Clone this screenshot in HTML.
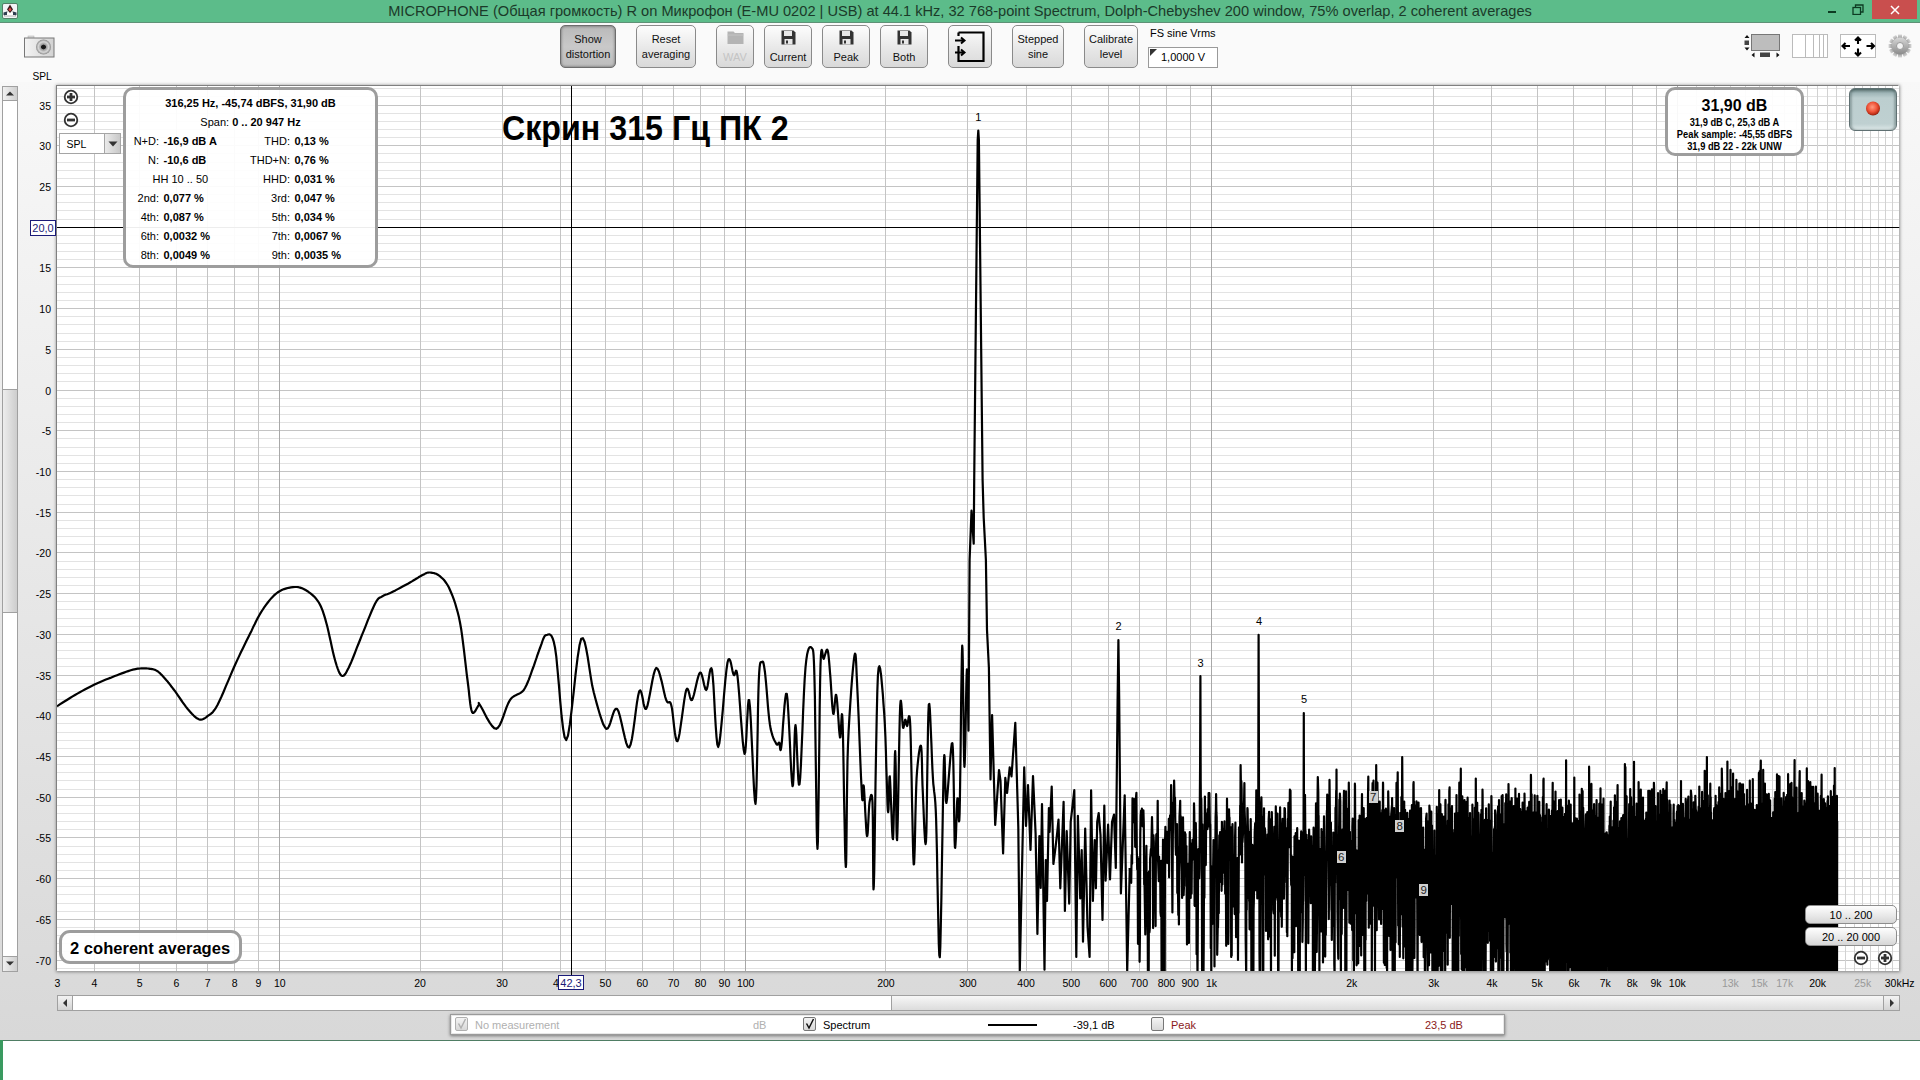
<!DOCTYPE html>
<html><head><meta charset="utf-8">
<style>
*{box-sizing:border-box}
html,body{margin:0;padding:0}
body{width:1920px;height:1080px;overflow:hidden;position:relative;font-family:"Liberation Sans",sans-serif;background:#fff;color:#000}
.a{position:absolute}
#titlebar{left:0;top:0;width:1920px;height:23px;background:#5cbc8a;border-bottom:1px solid #5e9176}
#ttext{left:0;top:0;width:1920px;height:22px;line-height:22px;text-align:center;font-size:15px;color:#1b3a29;white-space:nowrap;transform:scaleX(.9744)}
#toolbar{left:0;top:23px;width:1920px;height:59px;background:#fafafa}
#panel{left:0;top:82px;width:1920px;height:958px;background:linear-gradient(#f8f8f8,#d8d8d8)}
#bottom{left:0;top:1040px;width:1920px;height:40px;background:#fff;border-top:1px solid #4f7d64}
#plotbox{left:57px;top:86px;width:1842px;height:885px;background:#fff;box-shadow:-1px -1px 0 0 #808080,0 0 3px 1px rgba(0,0,0,.4)}
svg{position:absolute;left:0;top:0}
.btn{position:absolute;top:25px;height:43px;border:1px solid #8a8a8a;border-radius:5px;background:linear-gradient(#fdfdfd,#e6e6e6 60%,#d9d9d9);font-size:11px;text-align:center;line-height:15px;color:#111}
.btn .t{position:absolute;left:0;right:0;top:6px}
.btn.pressed{background:linear-gradient(#b9b9b9,#c9c9c9 50%,#bdbdbd);border-color:#6d6d6d;box-shadow:inset 0 0 3px rgba(0,0,0,.5)}
.ylab{position:absolute;right:1869px;font-size:10.5px;line-height:12px;text-align:right;white-space:nowrap}
.xlab{position:absolute;top:977px;font-size:10.5px;line-height:12px;white-space:nowrap;transform:translateX(-50%)}
.g{color:#999}
.dt{position:absolute;font-size:11px;line-height:13px;white-space:nowrap}
.r{text-align:right}
b{font-weight:bold}
.hl{position:absolute;font-size:11px;line-height:12px;transform:translateX(-50%)}
.hbox{position:absolute;font-size:11.5px;line-height:12px;background:#d0d0d0;color:#222;padding:0 1.5px}
.rb{position:absolute;border:1px solid #8d8d8d;border-radius:5px;background:linear-gradient(#fefefe,#e9e9e9 55%,#d6d6d6);font-size:11px;text-align:center;line-height:19px}
</style></head><body>
<div class="a" id="titlebar"></div>
<div class="a" id="ttext">MICROPHONE (Общая громкость) R on Микрофон (E-MU 0202 | USB) at 44.1 kHz, 32 768-point Spectrum, Dolph-Chebyshev 200 window, 75% overlap, 2 coherent averages</div>
<div class="a" id="toolbar"></div>
<div class="a" id="panel"></div>
<div class="a" id="plotbox"></div>
<div class="a" id="bottom"></div>
<svg width="1920" height="1080" viewBox="0 0 1920 1080">
<defs><clipPath id="pc"><rect x="57" y="86" width="1842.5" height="885"/></clipPath></defs>
<g clip-path="url(#pc)">
<line x1="57" y1="88.5" x2="1899.0" y2="88.5" stroke="#e3e3e3"/>
<line x1="57" y1="96.5" x2="1899.0" y2="96.5" stroke="#e3e3e3"/>
<line x1="57" y1="105.5" x2="1899.0" y2="105.5" stroke="#c4c4c4"/>
<line x1="57" y1="113.5" x2="1899.0" y2="113.5" stroke="#e3e3e3"/>
<line x1="57" y1="121.5" x2="1899.0" y2="121.5" stroke="#e3e3e3"/>
<line x1="57" y1="129.5" x2="1899.0" y2="129.5" stroke="#e3e3e3"/>
<line x1="57" y1="137.5" x2="1899.0" y2="137.5" stroke="#e3e3e3"/>
<line x1="57" y1="145.5" x2="1899.0" y2="145.5" stroke="#c4c4c4"/>
<line x1="57" y1="153.5" x2="1899.0" y2="153.5" stroke="#e3e3e3"/>
<line x1="57" y1="162.5" x2="1899.0" y2="162.5" stroke="#e3e3e3"/>
<line x1="57" y1="170.5" x2="1899.0" y2="170.5" stroke="#e3e3e3"/>
<line x1="57" y1="178.5" x2="1899.0" y2="178.5" stroke="#e3e3e3"/>
<line x1="57" y1="186.5" x2="1899.0" y2="186.5" stroke="#c4c4c4"/>
<line x1="57" y1="194.5" x2="1899.0" y2="194.5" stroke="#e3e3e3"/>
<line x1="57" y1="202.5" x2="1899.0" y2="202.5" stroke="#e3e3e3"/>
<line x1="57" y1="210.5" x2="1899.0" y2="210.5" stroke="#e3e3e3"/>
<line x1="57" y1="219.5" x2="1899.0" y2="219.5" stroke="#e3e3e3"/>
<line x1="57" y1="227.5" x2="1899.0" y2="227.5" stroke="#c4c4c4"/>
<line x1="57" y1="235.5" x2="1899.0" y2="235.5" stroke="#e3e3e3"/>
<line x1="57" y1="243.5" x2="1899.0" y2="243.5" stroke="#e3e3e3"/>
<line x1="57" y1="251.5" x2="1899.0" y2="251.5" stroke="#e3e3e3"/>
<line x1="57" y1="259.5" x2="1899.0" y2="259.5" stroke="#e3e3e3"/>
<line x1="57" y1="267.5" x2="1899.0" y2="267.5" stroke="#c4c4c4"/>
<line x1="57" y1="276.5" x2="1899.0" y2="276.5" stroke="#e3e3e3"/>
<line x1="57" y1="284.5" x2="1899.0" y2="284.5" stroke="#e3e3e3"/>
<line x1="57" y1="292.5" x2="1899.0" y2="292.5" stroke="#e3e3e3"/>
<line x1="57" y1="300.5" x2="1899.0" y2="300.5" stroke="#e3e3e3"/>
<line x1="57" y1="308.5" x2="1899.0" y2="308.5" stroke="#c4c4c4"/>
<line x1="57" y1="316.5" x2="1899.0" y2="316.5" stroke="#e3e3e3"/>
<line x1="57" y1="324.5" x2="1899.0" y2="324.5" stroke="#e3e3e3"/>
<line x1="57" y1="333.5" x2="1899.0" y2="333.5" stroke="#e3e3e3"/>
<line x1="57" y1="341.5" x2="1899.0" y2="341.5" stroke="#e3e3e3"/>
<line x1="57" y1="349.5" x2="1899.0" y2="349.5" stroke="#c4c4c4"/>
<line x1="57" y1="357.5" x2="1899.0" y2="357.5" stroke="#e3e3e3"/>
<line x1="57" y1="365.5" x2="1899.0" y2="365.5" stroke="#e3e3e3"/>
<line x1="57" y1="373.5" x2="1899.0" y2="373.5" stroke="#e3e3e3"/>
<line x1="57" y1="381.5" x2="1899.0" y2="381.5" stroke="#e3e3e3"/>
<line x1="57" y1="390.5" x2="1899.0" y2="390.5" stroke="#c4c4c4"/>
<line x1="57" y1="398.5" x2="1899.0" y2="398.5" stroke="#e3e3e3"/>
<line x1="57" y1="406.5" x2="1899.0" y2="406.5" stroke="#e3e3e3"/>
<line x1="57" y1="414.5" x2="1899.0" y2="414.5" stroke="#e3e3e3"/>
<line x1="57" y1="422.5" x2="1899.0" y2="422.5" stroke="#e3e3e3"/>
<line x1="57" y1="430.5" x2="1899.0" y2="430.5" stroke="#c4c4c4"/>
<line x1="57" y1="438.5" x2="1899.0" y2="438.5" stroke="#e3e3e3"/>
<line x1="57" y1="447.5" x2="1899.0" y2="447.5" stroke="#e3e3e3"/>
<line x1="57" y1="455.5" x2="1899.0" y2="455.5" stroke="#e3e3e3"/>
<line x1="57" y1="463.5" x2="1899.0" y2="463.5" stroke="#e3e3e3"/>
<line x1="57" y1="471.5" x2="1899.0" y2="471.5" stroke="#c4c4c4"/>
<line x1="57" y1="479.5" x2="1899.0" y2="479.5" stroke="#e3e3e3"/>
<line x1="57" y1="487.5" x2="1899.0" y2="487.5" stroke="#e3e3e3"/>
<line x1="57" y1="495.5" x2="1899.0" y2="495.5" stroke="#e3e3e3"/>
<line x1="57" y1="504.5" x2="1899.0" y2="504.5" stroke="#e3e3e3"/>
<line x1="57" y1="512.5" x2="1899.0" y2="512.5" stroke="#c4c4c4"/>
<line x1="57" y1="520.5" x2="1899.0" y2="520.5" stroke="#e3e3e3"/>
<line x1="57" y1="528.5" x2="1899.0" y2="528.5" stroke="#e3e3e3"/>
<line x1="57" y1="536.5" x2="1899.0" y2="536.5" stroke="#e3e3e3"/>
<line x1="57" y1="544.5" x2="1899.0" y2="544.5" stroke="#e3e3e3"/>
<line x1="57" y1="552.5" x2="1899.0" y2="552.5" stroke="#c4c4c4"/>
<line x1="57" y1="561.5" x2="1899.0" y2="561.5" stroke="#e3e3e3"/>
<line x1="57" y1="569.5" x2="1899.0" y2="569.5" stroke="#e3e3e3"/>
<line x1="57" y1="577.5" x2="1899.0" y2="577.5" stroke="#e3e3e3"/>
<line x1="57" y1="585.5" x2="1899.0" y2="585.5" stroke="#e3e3e3"/>
<line x1="57" y1="593.5" x2="1899.0" y2="593.5" stroke="#c4c4c4"/>
<line x1="57" y1="601.5" x2="1899.0" y2="601.5" stroke="#e3e3e3"/>
<line x1="57" y1="609.5" x2="1899.0" y2="609.5" stroke="#e3e3e3"/>
<line x1="57" y1="618.5" x2="1899.0" y2="618.5" stroke="#e3e3e3"/>
<line x1="57" y1="626.5" x2="1899.0" y2="626.5" stroke="#e3e3e3"/>
<line x1="57" y1="634.5" x2="1899.0" y2="634.5" stroke="#c4c4c4"/>
<line x1="57" y1="642.5" x2="1899.0" y2="642.5" stroke="#e3e3e3"/>
<line x1="57" y1="650.5" x2="1899.0" y2="650.5" stroke="#e3e3e3"/>
<line x1="57" y1="658.5" x2="1899.0" y2="658.5" stroke="#e3e3e3"/>
<line x1="57" y1="666.5" x2="1899.0" y2="666.5" stroke="#e3e3e3"/>
<line x1="57" y1="675.5" x2="1899.0" y2="675.5" stroke="#c4c4c4"/>
<line x1="57" y1="683.5" x2="1899.0" y2="683.5" stroke="#e3e3e3"/>
<line x1="57" y1="691.5" x2="1899.0" y2="691.5" stroke="#e3e3e3"/>
<line x1="57" y1="699.5" x2="1899.0" y2="699.5" stroke="#e3e3e3"/>
<line x1="57" y1="707.5" x2="1899.0" y2="707.5" stroke="#e3e3e3"/>
<line x1="57" y1="715.5" x2="1899.0" y2="715.5" stroke="#c4c4c4"/>
<line x1="57" y1="723.5" x2="1899.0" y2="723.5" stroke="#e3e3e3"/>
<line x1="57" y1="732.5" x2="1899.0" y2="732.5" stroke="#e3e3e3"/>
<line x1="57" y1="740.5" x2="1899.0" y2="740.5" stroke="#e3e3e3"/>
<line x1="57" y1="748.5" x2="1899.0" y2="748.5" stroke="#e3e3e3"/>
<line x1="57" y1="756.5" x2="1899.0" y2="756.5" stroke="#c4c4c4"/>
<line x1="57" y1="764.5" x2="1899.0" y2="764.5" stroke="#e3e3e3"/>
<line x1="57" y1="772.5" x2="1899.0" y2="772.5" stroke="#e3e3e3"/>
<line x1="57" y1="780.5" x2="1899.0" y2="780.5" stroke="#e3e3e3"/>
<line x1="57" y1="789.5" x2="1899.0" y2="789.5" stroke="#e3e3e3"/>
<line x1="57" y1="797.5" x2="1899.0" y2="797.5" stroke="#c4c4c4"/>
<line x1="57" y1="805.5" x2="1899.0" y2="805.5" stroke="#e3e3e3"/>
<line x1="57" y1="813.5" x2="1899.0" y2="813.5" stroke="#e3e3e3"/>
<line x1="57" y1="821.5" x2="1899.0" y2="821.5" stroke="#e3e3e3"/>
<line x1="57" y1="829.5" x2="1899.0" y2="829.5" stroke="#e3e3e3"/>
<line x1="57" y1="837.5" x2="1899.0" y2="837.5" stroke="#c4c4c4"/>
<line x1="57" y1="846.5" x2="1899.0" y2="846.5" stroke="#e3e3e3"/>
<line x1="57" y1="854.5" x2="1899.0" y2="854.5" stroke="#e3e3e3"/>
<line x1="57" y1="862.5" x2="1899.0" y2="862.5" stroke="#e3e3e3"/>
<line x1="57" y1="870.5" x2="1899.0" y2="870.5" stroke="#e3e3e3"/>
<line x1="57" y1="878.5" x2="1899.0" y2="878.5" stroke="#c4c4c4"/>
<line x1="57" y1="886.5" x2="1899.0" y2="886.5" stroke="#e3e3e3"/>
<line x1="57" y1="894.5" x2="1899.0" y2="894.5" stroke="#e3e3e3"/>
<line x1="57" y1="903.5" x2="1899.0" y2="903.5" stroke="#e3e3e3"/>
<line x1="57" y1="911.5" x2="1899.0" y2="911.5" stroke="#e3e3e3"/>
<line x1="57" y1="919.5" x2="1899.0" y2="919.5" stroke="#c4c4c4"/>
<line x1="57" y1="927.5" x2="1899.0" y2="927.5" stroke="#e3e3e3"/>
<line x1="57" y1="935.5" x2="1899.0" y2="935.5" stroke="#e3e3e3"/>
<line x1="57" y1="943.5" x2="1899.0" y2="943.5" stroke="#e3e3e3"/>
<line x1="57" y1="951.5" x2="1899.0" y2="951.5" stroke="#e3e3e3"/>
<line x1="57" y1="960.5" x2="1899.0" y2="960.5" stroke="#c4c4c4"/>
<line x1="57" y1="968.5" x2="1899.0" y2="968.5" stroke="#e3e3e3"/>
<line x1="94.5" y1="86" x2="94.5" y2="971" stroke="#c4c4c4"/>
<line x1="139.5" y1="86" x2="139.5" y2="971" stroke="#c4c4c4"/>
<line x1="176.5" y1="86" x2="176.5" y2="971" stroke="#c4c4c4"/>
<line x1="207.5" y1="86" x2="207.5" y2="971" stroke="#c4c4c4"/>
<line x1="234.5" y1="86" x2="234.5" y2="971" stroke="#c4c4c4"/>
<line x1="258.5" y1="86" x2="258.5" y2="971" stroke="#c4c4c4"/>
<line x1="279.5" y1="86" x2="279.5" y2="971" stroke="#a8a8a8"/>
<line x1="420.5" y1="86" x2="420.5" y2="971" stroke="#c4c4c4"/>
<line x1="502.5" y1="86" x2="502.5" y2="971" stroke="#c4c4c4"/>
<line x1="560.5" y1="86" x2="560.5" y2="971" stroke="#c4c4c4"/>
<line x1="605.5" y1="86" x2="605.5" y2="971" stroke="#c4c4c4"/>
<line x1="642.5" y1="86" x2="642.5" y2="971" stroke="#c4c4c4"/>
<line x1="673.5" y1="86" x2="673.5" y2="971" stroke="#c4c4c4"/>
<line x1="700.5" y1="86" x2="700.5" y2="971" stroke="#c4c4c4"/>
<line x1="724.5" y1="86" x2="724.5" y2="971" stroke="#c4c4c4"/>
<line x1="745.5" y1="86" x2="745.5" y2="971" stroke="#a8a8a8"/>
<line x1="885.5" y1="86" x2="885.5" y2="971" stroke="#c4c4c4"/>
<line x1="967.5" y1="86" x2="967.5" y2="971" stroke="#c4c4c4"/>
<line x1="1026.5" y1="86" x2="1026.5" y2="971" stroke="#c4c4c4"/>
<line x1="1071.5" y1="86" x2="1071.5" y2="971" stroke="#c4c4c4"/>
<line x1="1108.5" y1="86" x2="1108.5" y2="971" stroke="#c4c4c4"/>
<line x1="1139.5" y1="86" x2="1139.5" y2="971" stroke="#c4c4c4"/>
<line x1="1166.5" y1="86" x2="1166.5" y2="971" stroke="#c4c4c4"/>
<line x1="1190.5" y1="86" x2="1190.5" y2="971" stroke="#c4c4c4"/>
<line x1="1211.5" y1="86" x2="1211.5" y2="971" stroke="#a8a8a8"/>
<line x1="1351.5" y1="86" x2="1351.5" y2="971" stroke="#c4c4c4"/>
<line x1="1433.5" y1="86" x2="1433.5" y2="971" stroke="#c4c4c4"/>
<line x1="1491.5" y1="86" x2="1491.5" y2="971" stroke="#c4c4c4"/>
<line x1="1537.5" y1="86" x2="1537.5" y2="971" stroke="#c4c4c4"/>
<line x1="1573.5" y1="86" x2="1573.5" y2="971" stroke="#c4c4c4"/>
<line x1="1605.5" y1="86" x2="1605.5" y2="971" stroke="#c4c4c4"/>
<line x1="1632.5" y1="86" x2="1632.5" y2="971" stroke="#c4c4c4"/>
<line x1="1656.5" y1="86" x2="1656.5" y2="971" stroke="#c4c4c4"/>
<line x1="1677.5" y1="86" x2="1677.5" y2="971" stroke="#a8a8a8"/>
<line x1="1696.5" y1="86" x2="1696.5" y2="971" stroke="#d2d2d2"/>
<line x1="1714.5" y1="86" x2="1714.5" y2="971" stroke="#d2d2d2"/>
<line x1="1730.5" y1="86" x2="1730.5" y2="971" stroke="#d2d2d2"/>
<line x1="1745.5" y1="86" x2="1745.5" y2="971" stroke="#d2d2d2"/>
<line x1="1759.5" y1="86" x2="1759.5" y2="971" stroke="#d2d2d2"/>
<line x1="1772.5" y1="86" x2="1772.5" y2="971" stroke="#d2d2d2"/>
<line x1="1784.5" y1="86" x2="1784.5" y2="971" stroke="#d2d2d2"/>
<line x1="1796.5" y1="86" x2="1796.5" y2="971" stroke="#d2d2d2"/>
<line x1="1807.5" y1="86" x2="1807.5" y2="971" stroke="#d2d2d2"/>
<line x1="1817.5" y1="86" x2="1817.5" y2="971" stroke="#d2d2d2"/>
<line x1="1827.5" y1="86" x2="1827.5" y2="971" stroke="#d2d2d2"/>
<line x1="1836.5" y1="86" x2="1836.5" y2="971" stroke="#d2d2d2"/>
<line x1="1845.5" y1="86" x2="1845.5" y2="971" stroke="#d2d2d2"/>
<line x1="1854.5" y1="86" x2="1854.5" y2="971" stroke="#d2d2d2"/>
<line x1="1862.5" y1="86" x2="1862.5" y2="971" stroke="#d2d2d2"/>
<line x1="1870.5" y1="86" x2="1870.5" y2="971" stroke="#d2d2d2"/>
<line x1="1878.5" y1="86" x2="1878.5" y2="971" stroke="#d2d2d2"/>
<line x1="1885.5" y1="86" x2="1885.5" y2="971" stroke="#d2d2d2"/>
<line x1="1892.5" y1="86" x2="1892.5" y2="971" stroke="#d2d2d2"/>
<line x1="571.5" y1="86" x2="571.5" y2="971" stroke="#000"/>
<line x1="57" y1="227.5" x2="1899.5" y2="227.5" stroke="#000"/>
<path d="M57.0,706.2 58.4,705.4 60.2,704.2 62.4,702.8 64.8,701.3 67.3,699.7 70.0,698.0 72.6,696.4 75.0,695.0 77.4,693.6 79.8,692.3 82.3,690.9 84.8,689.5 87.2,688.2 89.7,686.9 92.1,685.7 94.5,684.5 96.8,683.4 99.1,682.4 101.4,681.4 103.6,680.5 105.9,679.6 108.1,678.7 110.3,677.9 112.5,677.0 114.8,676.1 117.1,675.2 119.4,674.3 121.8,673.4 124.0,672.6 126.2,671.8 128.2,671.1 130.0,670.5 131.6,670.0 133.0,669.6 134.3,669.3 135.5,669.1 136.6,668.9 137.7,668.7 138.8,668.6 140.0,668.5 141.3,668.4 142.6,668.4 143.9,668.3 145.2,668.3 146.4,668.4 147.7,668.5 148.9,668.6 150.0,668.8 151.0,668.9 152.0,669.1 152.9,669.2 153.8,669.5 154.7,669.8 155.6,670.1 156.5,670.6 157.5,671.2 158.5,672.0 159.6,672.9 160.7,674.0 161.8,675.1 162.9,676.3 164.0,677.5 165.1,678.7 166.2,680.0 167.3,681.2 168.3,682.5 169.4,683.8 170.4,685.1 171.4,686.5 172.5,687.9 173.7,689.5 175.0,691.2 176.4,693.2 177.9,695.3 179.5,697.7 181.1,700.0 182.7,702.4 184.4,704.7 186.0,706.9 187.5,708.8 189.0,710.5 190.5,712.2 191.9,713.8 193.4,715.3 194.8,716.6 196.1,717.7 197.5,718.6 198.8,719.2 200.0,719.6 201.1,719.6 202.2,719.5 203.2,719.1 204.2,718.6 205.3,717.9 206.4,717.1 207.5,716.2 208.6,715.4 209.7,714.7 210.8,713.9 212.0,712.9 213.1,711.7 214.4,710.0 215.9,707.8 217.5,705.0 219.3,701.3 221.4,696.8 223.6,691.7 225.9,686.2 228.3,680.6 230.6,675.1 232.9,669.8 235.0,665.0 237.0,660.6 239.0,656.4 240.9,652.3 242.8,648.4 244.7,644.5 246.5,640.8 248.3,637.2 250.0,633.8 251.7,630.4 253.2,627.1 254.8,624.0 256.2,621.0 257.7,618.1 259.3,615.3 260.8,612.6 262.5,610.0 264.2,607.4 266.0,604.9 267.8,602.5 269.7,600.1 271.6,597.9 273.5,595.9 275.5,594.1 277.5,592.5 279.6,591.2 281.8,590.1 284.1,589.1 286.4,588.4 288.7,587.8 290.9,587.4 293.0,587.1 295.0,587.0 296.8,587.0 298.5,587.2 300.1,587.6 301.6,588.1 303.1,588.7 304.6,589.5 306.0,590.3 307.5,591.2 309.0,592.3 310.5,593.4 312.0,594.6 313.4,595.9 314.9,597.3 316.2,598.9 317.5,600.6 318.8,602.5 319.9,604.5 320.9,606.5 321.8,608.6 322.7,610.9 323.5,613.3 324.4,616.1 325.3,619.1 326.2,622.5 327.3,626.5 328.4,631.2 329.5,636.2 330.7,641.5 331.8,646.8 332.9,651.7 334.0,656.2 335.0,660.0 335.9,663.2 336.8,666.0 337.7,668.6 338.5,670.7 339.3,672.6 340.1,674.0 340.9,675.1 341.8,675.8 342.6,676.0 343.4,675.8 344.2,675.3 345.0,674.3 345.8,673.1 346.7,671.5 347.7,669.6 348.8,667.5 349.9,665.0 351.2,662.2 352.5,659.0 353.9,655.5 355.3,651.8 356.8,647.9 358.4,644.0 360.0,640.0 361.7,635.7 363.7,630.9 365.7,625.8 367.7,620.6 369.8,615.6 371.7,611.0 373.5,607.0 375.0,603.8 376.3,601.4 377.4,599.8 378.3,598.7 379.1,598.0 379.9,597.5 380.7,597.2 381.6,596.8 382.5,596.2 383.5,595.6 384.4,595.2 385.3,594.8 386.2,594.5 387.2,594.2 388.3,593.8 389.7,593.2 391.2,592.5 393.2,591.5 395.4,590.4 397.8,589.1 400.4,587.7 403.0,586.3 405.5,585.0 407.9,583.7 410.0,582.5 411.9,581.4 413.7,580.3 415.4,579.3 417.0,578.3 418.5,577.3 419.9,576.5 421.2,575.7 422.5,575.0 423.7,574.4 424.7,573.9 425.6,573.4 426.4,573.0 427.2,572.8 428.1,572.6 429.0,572.5 430.0,572.5 431.1,572.6 432.3,572.8 433.6,573.0 434.8,573.4 436.1,573.8 437.4,574.5 438.7,575.3 440.0,576.2 441.2,577.4 442.5,578.5 443.8,579.8 445.0,581.3 446.2,583.0 447.5,585.0 448.8,587.3 450.0,590.0 451.3,593.0 452.6,596.2 453.9,599.7 455.2,603.5 456.4,607.7 457.7,612.2 458.9,617.1 460.0,622.5 461.1,628.7 462.1,635.7 463.1,643.4 464.1,651.3 465.0,659.2 465.9,666.8 466.7,673.9 467.5,680.0 468.2,685.5 468.8,690.7 469.3,695.6 469.8,700.0 470.3,704.0 470.8,707.3 471.4,710.0 472.0,712.0 472.8,712.9 473.7,712.8 474.6,711.9 475.6,710.5 476.5,708.8 477.4,707.2 478.2,705.8 478.8,705.0 479.1,704.5 479.1,704.0 479.0,703.4 478.8,703.1 478.7,703.0 478.8,703.2 479.2,703.8 480.0,705.0 481.3,707.2 483.1,710.5 485.1,714.5 487.3,718.7 489.7,722.6 492.0,725.9 494.2,728.1 496.2,728.8 498.1,727.5 499.9,724.8 501.6,721.0 503.3,716.5 505.0,711.7 506.6,707.1 508.3,703.1 510.0,700.0 511.7,697.9 513.5,696.5 515.4,695.4 517.2,694.6 518.9,693.8 520.6,692.9 522.2,691.7 523.8,690.0 525.1,687.8 526.4,685.3 527.6,682.5 528.8,679.6 529.9,676.6 531.0,673.6 532.0,670.7 533.0,668.0 534.0,665.4 534.9,662.7 535.8,660.0 536.7,657.4 537.5,654.9 538.4,652.5 539.2,650.2 540.0,648.0 540.8,645.9 541.6,643.7 542.3,641.5 543.0,639.5 543.8,637.7 544.5,636.3 545.4,635.4 546.2,635.0 547.2,634.8 548.2,634.5 549.2,634.3 550.3,634.7 551.4,635.8 552.6,638.2 553.8,641.9 555.0,647.5 556.3,656.6 557.5,669.5 558.9,684.8 560.2,700.9 561.6,716.0 563.1,728.6 564.6,737.2 566.2,740.0 568.0,735.6 569.8,724.7 571.7,709.4 573.7,691.8 575.6,673.9 577.6,657.7 579.5,645.3 581.2,638.8 582.9,638.2 584.6,641.7 586.1,648.3 587.7,657.0 589.2,666.8 590.7,676.7 592.2,685.6 593.8,692.5 595.3,698.3 596.9,704.1 598.5,709.8 600.1,715.2 601.7,720.0 603.2,724.1 604.8,727.0 606.2,728.8 607.7,728.5 609.0,726.3 610.3,722.8 611.6,718.6 612.9,714.4 614.2,710.9 615.6,708.8 617.0,708.8 618.5,711.4 620.0,716.5 621.6,723.2 623.2,730.4 624.8,737.3 626.3,743.1 627.8,746.8 629.2,747.5 630.6,744.5 632.0,738.4 633.3,730.1 634.6,720.7 635.8,711.1 637.0,702.4 638.2,695.4 639.2,691.2 640.2,690.3 641.1,691.8 642.0,695.0 642.8,699.0 643.5,703.2 644.4,706.7 645.3,708.8 646.2,708.8 647.4,705.9 648.5,701.0 649.8,694.5 651.1,687.5 652.4,680.5 653.7,674.4 655.0,670.0 656.2,668.0 657.5,668.7 658.9,671.5 660.2,675.9 661.6,681.1 662.9,686.8 664.1,692.2 665.2,696.8 666.2,700.0 667.1,701.7 667.8,702.4 668.4,702.5 669.0,702.2 669.5,702.0 670.0,702.2 670.6,703.1 671.2,705.0 672.0,708.6 672.7,713.9 673.4,720.2 674.1,726.6 674.9,732.7 675.7,737.6 676.6,740.7 677.5,741.2 678.5,738.6 679.6,733.2 680.7,725.7 681.9,717.3 683.1,708.6 684.2,700.6 685.3,694.1 686.2,690.0 687.1,688.6 687.8,689.1 688.5,690.9 689.2,693.5 689.8,696.3 690.5,698.7 691.2,700.1 692.0,700.0 692.9,698.0 693.9,694.7 694.9,690.5 696.0,685.8 697.0,681.2 698.1,677.1 699.1,674.0 700.0,672.5 700.9,672.8 701.7,674.6 702.5,677.4 703.3,680.8 704.0,684.2 704.8,687.2 705.5,689.3 706.2,690.0 707.0,688.6 707.7,685.4 708.4,681.0 709.1,676.3 709.8,672.0 710.5,669.1 711.3,668.1 712.0,670.0 712.7,676.1 713.5,686.2 714.2,698.9 714.9,712.5 715.7,725.7 716.5,736.8 717.3,744.4 718.2,747.0 719.3,743.5 720.4,735.0 721.6,722.9 722.9,708.8 724.1,694.2 725.3,680.6 726.5,669.5 727.5,662.5 728.4,659.5 729.3,659.1 730.2,660.6 731.0,663.4 731.7,666.9 732.4,670.4 733.1,673.3 733.8,675.0 734.3,675.2 734.8,674.3 735.2,672.9 735.6,671.6 736.0,670.7 736.4,670.8 736.9,672.5 737.5,676.2 738.2,683.2 739.1,693.3 740.0,705.5 740.9,718.4 741.9,730.9 742.8,741.8 743.7,749.8 744.5,753.8 745.2,752.2 745.8,745.8 746.4,736.3 746.9,725.2 747.5,714.4 748.0,705.4 748.6,700.1 749.2,700.0 750.0,707.0 750.8,720.2 751.6,737.4 752.5,756.2 753.3,774.6 754.1,790.1 754.9,800.6 755.5,803.8 756.0,798.4 756.5,786.3 756.9,769.4 757.3,749.5 757.7,728.7 758.0,708.8 758.4,692.0 758.8,680.0 759.2,672.5 759.6,667.4 760.0,664.3 760.4,662.6 760.8,662.0 761.2,662.0 761.6,662.2 762.0,662.0 762.4,661.7 762.7,661.6 763.1,662.0 763.4,662.8 763.7,664.2 764.1,666.3 764.5,669.0 765.0,672.5 765.5,677.3 766.1,683.5 766.7,690.6 767.3,698.2 767.9,705.9 768.6,713.3 769.3,719.8 770.0,725.0 770.7,729.1 771.6,732.5 772.4,735.4 773.2,737.7 774.1,739.7 774.9,741.3 775.6,742.6 776.2,743.8 776.8,744.5 777.3,744.7 777.7,744.5 778.0,744.0 778.3,743.4 778.6,742.8 778.9,742.5 779.2,742.5 779.5,743.2 779.7,744.7 779.9,746.5 780.1,748.3 780.3,749.7 780.5,750.2 780.8,749.6 781.2,747.5 781.8,742.6 782.4,734.8 783.0,725.2 783.8,715.2 784.5,705.8 785.3,698.3 786.0,693.9 786.8,693.8 787.5,699.4 788.2,710.2 789.0,724.5 789.8,740.5 790.5,756.4 791.2,770.5 791.9,781.0 792.5,786.2 793.0,785.1 793.4,778.9 793.8,769.2 794.1,757.7 794.4,745.9 794.7,735.4 795.1,727.9 795.5,725.0 795.9,727.9 796.4,735.5 796.8,746.2 797.3,758.2 797.8,769.8 798.3,779.2 798.9,784.7 799.5,784.5 800.2,777.7 800.9,765.4 801.6,749.3 802.4,730.9 803.1,712.0 803.9,694.0 804.7,678.7 805.5,667.5 806.3,660.0 807.1,654.6 808.0,650.8 808.8,648.4 809.7,647.3 810.4,647.0 811.1,647.3 811.8,648.0 812.3,648.6 812.7,649.2 813.0,650.2 813.3,652.2 813.6,655.7 813.9,661.2 814.2,669.1 814.5,680.0 814.9,697.0 815.2,720.8 815.6,748.8 816.0,777.9 816.4,805.3 816.7,828.1 817.1,843.6 817.5,848.8 817.9,841.4 818.2,823.4 818.6,797.9 819.0,767.8 819.4,736.4 819.7,706.7 820.1,681.9 820.5,665.0 820.9,655.7 821.3,651.0 821.7,649.8 822.1,650.9 822.5,653.5 822.9,656.3 823.3,658.4 823.8,658.8 824.2,657.6 824.7,656.0 825.2,654.3 825.7,652.6 826.2,651.1 826.6,650.0 827.1,649.6 827.5,650.0 827.9,651.2 828.2,653.0 828.5,655.3 828.8,658.1 829.1,661.3 829.4,664.8 829.7,668.6 830.0,672.5 830.4,677.2 830.8,682.9 831.2,689.2 831.6,695.7 832.0,701.9 832.4,707.2 832.9,711.3 833.2,713.8 833.6,713.9 834.0,711.8 834.4,708.4 834.7,704.3 835.1,700.2 835.5,696.8 835.8,694.8 836.2,695.0 836.7,697.8 837.2,702.7 837.7,709.1 838.2,716.2 838.7,723.3 839.1,729.7 839.6,734.6 840.0,737.5 840.4,737.1 840.7,733.5 841.0,728.1 841.3,722.2 841.6,717.2 841.9,714.2 842.2,714.7 842.5,720.0 842.9,732.3 843.3,751.5 843.7,774.9 844.1,800.0 844.6,824.3 845.0,845.3 845.4,860.4 845.8,867.0 846.1,864.4 846.3,854.7 846.5,839.5 846.7,820.8 846.9,800.2 847.2,779.5 847.5,760.5 848.0,745.0 848.6,731.4 849.4,717.4 850.3,703.5 851.2,690.3 852.1,678.4 853.0,668.2 853.8,660.4 854.5,655.5 855.0,653.6 855.5,654.3 855.8,657.2 856.1,661.9 856.4,668.2 856.7,675.6 857.1,683.8 857.5,692.5 858.0,703.1 858.6,716.4 859.2,731.5 859.8,747.3 860.4,762.7 861.0,776.7 861.6,788.3 862.0,796.2 862.3,800.0 862.6,800.3 862.8,798.2 863.0,794.6 863.1,790.6 863.3,787.2 863.5,785.4 863.8,786.2 864.1,790.2 864.5,796.5 864.9,804.3 865.3,812.7 865.8,821.0 866.2,828.2 866.6,833.6 867.0,836.2 867.3,835.8 867.7,832.9 868.0,828.2 868.3,822.5 868.6,816.4 868.9,810.5 869.2,805.7 869.5,802.5 869.9,800.3 870.3,798.2 870.7,796.3 871.1,795.1 871.5,794.9 871.9,795.8 872.2,798.3 872.5,802.5 872.7,811.0 872.9,824.5 873.0,840.8 873.1,857.6 873.2,872.8 873.3,884.2 873.5,889.4 873.8,886.4 874.2,872.5 874.6,848.6 875.0,818.0 875.5,783.9 876.1,749.4 876.7,717.7 877.3,692.1 877.9,675.6 878.6,668.0 879.4,666.2 880.2,668.9 881.1,675.2 881.9,683.9 882.8,693.9 883.5,704.1 884.2,713.4 884.8,723.6 885.4,736.7 885.9,751.4 886.3,766.7 886.8,781.4 887.2,794.4 887.5,804.6 887.9,810.9 888.2,812.2 888.5,809.3 888.7,803.3 888.9,795.8 889.1,787.9 889.3,781.2 889.5,776.9 889.8,776.3 890.1,780.5 890.5,788.7 890.9,799.4 891.4,811.1 891.8,822.4 892.2,831.8 892.6,837.9 893.0,839.2 893.3,834.2 893.6,823.6 893.9,809.4 894.2,793.5 894.4,777.8 894.7,764.2 894.9,754.7 895.2,751.1 895.4,755.3 895.7,766.1 895.9,781.3 896.1,798.5 896.3,815.3 896.5,829.4 896.8,838.5 897.1,840.1 897.4,832.9 897.8,818.5 898.2,799.1 898.6,777.0 899.0,754.3 899.4,733.4 899.8,716.4 900.2,705.5 900.6,701.0 900.9,700.7 901.3,703.6 901.7,708.6 902.0,714.6 902.3,720.4 902.7,725.1 903.0,727.5 903.3,727.9 903.6,727.3 903.9,726.1 904.2,724.6 904.4,722.9 904.7,721.4 904.9,720.2 905.2,719.7 905.4,719.9 905.7,720.4 905.9,721.3 906.1,722.4 906.3,723.5 906.5,724.5 906.8,725.4 907.1,726.0 907.4,725.4 907.8,723.2 908.2,720.4 908.6,717.7 909.0,716.1 909.5,716.4 909.9,719.4 910.3,726.0 910.7,738.2 911.1,756.1 911.6,777.7 912.0,800.6 912.5,822.9 912.9,842.4 913.3,856.9 913.7,864.4 914.1,864.0 914.4,857.3 914.8,846.0 915.1,831.7 915.4,816.2 915.8,800.9 916.2,787.6 916.6,777.8 917.1,770.7 917.7,764.1 918.3,758.4 918.9,753.5 919.5,749.7 920.0,747.0 920.6,745.7 921.0,745.8 921.3,747.8 921.6,751.8 921.8,757.3 922.0,763.8 922.1,771.0 922.3,778.4 922.5,785.5 922.8,792.0 923.1,799.3 923.5,808.5 923.9,818.5 924.3,828.1 924.8,836.4 925.2,842.1 925.6,844.1 926.0,841.4 926.4,831.8 926.7,815.4 927.0,794.5 927.3,771.5 927.7,748.7 928.0,728.4 928.4,712.9 928.8,704.6 929.3,703.9 929.8,708.9 930.3,718.1 930.8,730.1 931.4,743.5 931.9,756.8 932.4,768.8 932.9,777.8 933.3,783.8 933.8,788.0 934.1,791.2 934.5,794.2 934.9,797.6 935.3,802.4 935.7,809.1 936.1,818.7 936.5,833.6 937.0,854.3 937.4,878.2 937.9,902.8 938.4,925.5 938.8,943.9 939.3,955.3 939.8,957.2 940.3,947.0 940.8,926.0 941.4,897.5 941.9,864.9 942.5,831.5 943.0,800.7 943.5,775.9 943.9,760.5 944.3,755.1 944.6,756.7 944.8,763.4 945.0,773.2 945.3,784.0 945.6,794.0 945.9,800.9 946.4,803.0 947.0,799.3 947.7,791.4 948.5,780.9 949.4,769.3 950.3,758.1 951.1,749.0 951.8,743.5 952.4,743.2 952.9,749.4 953.3,761.2 953.6,776.9 953.9,794.5 954.1,812.1 954.4,828.0 954.6,840.3 954.9,847.1 955.2,847.9 955.5,844.1 955.9,837.1 956.2,828.2 956.5,818.6 956.8,809.5 957.1,802.4 957.4,798.3 957.7,798.4 958.0,802.0 958.2,807.5 958.5,813.6 958.8,818.8 959.0,821.5 959.3,820.4 959.6,814.0 959.9,799.8 960.2,778.1 960.6,751.6 960.9,723.3 961.2,695.7 961.6,671.7 961.9,654.1 962.2,645.7 962.5,648.5 962.8,660.8 963.0,679.5 963.3,701.8 963.6,724.7 963.8,745.1 964.1,760.1 964.4,766.8 964.7,764.0 965.0,754.1 965.4,739.3 965.7,721.8 966.0,703.8 966.3,687.6 966.6,675.4 966.9,669.3 967.2,669.8 967.4,674.9 967.6,683.4 967.9,693.9 968.1,705.2 968.2,715.9 968.4,724.9 968.5,730.7 969.6,560.0 971.5,510.7 973.7,543.7 974.2,480.0 977.7,140.0 978.3,130.5 978.9,140.0 982.6,480.0 983.7,517.8 985.9,560.0 987.0,630.0 988.9,667.8 990.5,779.4 992.1,715.0 995.2,825.0 999.0,770.0 1000.5,781.0 1003.1,853.4 1005.3,777.8 1007.1,793.0 1009.7,767.4 1011.5,776.3 1015.3,722.9 1018.3,827.2 1019.8,971.0 1024.2,767.4 1026.0,826.0 1028.0,785.0 1030.5,850.0 1033.0,776.0 1035.6,833.6 1037.4,934.0 1039.4,836.0 1040.7,888.0 1042.0,804.0 1044.5,969.7 1045.8,860.0 1047.0,901.0 1048.9,808.0 1049.6,832.0 1051.7,786.5 1053.4,864.0 1055.5,847.6 1057.3,832.0 1058.5,819.6 1060.3,888.3 1063.6,801.8 1064.9,911.0 1066.7,831.0 1069.2,903.6 1070.7,822.0 1074.3,790.0 1076.3,957.0 1077.9,815.8 1080.2,898.5 1081.7,850.0 1083.0,941.7 1085.2,828.5 1087.5,926.5 1089.6,957.0 1091.1,790.3 1092.9,901.0 1094.7,840.0 1095.9,888.3 1097.2,822.0 1098.7,813.0 1100.5,835.0 1102.5,920.0 1104.3,805.6 1105.6,880.7 1108.1,824.7 1110.0,879.4 1112.0,822.0 1114.0,814.5 1115.8,868.0 1117.6,700.0 1118.4,640.0 1119.2,700.0 1120.9,893.4 1124.7,795.4 1127.2,971.0 1129.8,868.0" fill="none" stroke="#000" stroke-width="2.2" stroke-linejoin="round"/>
<path d="M1129.8,868.0 1131.2,882.8 1131.6,855.0 1132.1,863.7 1132.5,798.4 1132.9,806.0 1133.3,801.4 1133.7,802.8 1134.1,799.2 1134.5,822.8 1134.8,811.2 1135.2,846.8 1135.6,844.1 1136.0,797.6 1136.4,792.8 1136.8,850.3 1137.2,869.6 1137.6,856.9 1138.0,943.8 1138.4,858.8 1138.8,882.8 1139.2,877.4 1139.6,961.8 1139.9,937.0 1140.3,834.2 1140.7,815.6 1141.1,810.5 1141.5,816.1 1141.9,808.7 1142.3,818.2 1142.6,826.3 1143.0,819.8 1143.4,810.3 1143.8,823.9 1144.2,884.6 1144.5,883.7 1144.9,907.3 1145.3,934.5 1145.7,920.4 1146.0,868.9 1146.4,845.9 1146.8,923.9 1147.2,915.6 1147.5,872.9 1147.9,973.5 1148.3,975.0 1148.7,975.0 1149.0,871.4 1149.4,932.3 1149.8,928.5 1150.1,859.0 1150.5,854.4 1150.9,849.2 1151.2,855.3 1151.6,835.8 1152.0,817.1 1152.3,830.0 1152.7,849.0 1153.1,928.1 1153.4,835.1 1153.8,841.7 1154.1,881.8 1154.5,856.1 1154.9,864.8 1155.2,901.4 1155.6,926.1 1155.9,854.0 1156.3,834.4 1156.7,853.4 1157.0,834.3 1157.4,838.7 1157.7,800.8 1158.1,861.0 1158.4,869.7 1158.8,881.1 1159.1,856.5 1159.5,873.7 1159.8,880.7 1160.2,869.4 1160.5,912.4 1160.9,916.1 1161.2,860.9 1161.6,975.0 1161.9,909.1 1162.3,975.0 1162.6,887.0 1163.0,839.7 1163.3,895.4 1163.7,881.3 1164.0,893.9 1164.3,970.2 1164.7,975.0 1165.0,843.9 1165.4,826.9 1165.7,861.2 1166.1,831.6 1166.4,841.8 1166.7,845.2 1167.1,863.1 1167.4,847.1 1167.8,831.7 1168.1,858.9 1168.4,858.1 1168.8,818.8 1169.1,877.3 1169.4,842.3 1169.8,822.9 1170.1,815.4 1170.4,830.0 1170.8,818.8 1171.1,785.1 1171.4,808.5 1171.8,806.9 1172.1,867.8 1172.4,912.5 1172.8,842.6 1173.1,809.5 1173.4,802.6 1173.7,807.0 1174.1,780.6 1174.4,792.5 1174.7,811.7 1175.0,797.7 1175.4,829.0 1175.7,847.9 1176.0,854.8 1176.3,836.3 1176.7,834.0 1177.0,824.2 1177.3,893.0 1177.6,876.1 1178.0,891.2 1178.3,915.1 1178.6,847.2 1178.9,924.4 1179.2,886.7 1179.5,816.7 1179.9,808.3 1180.2,800.8 1180.5,840.9 1180.8,816.4 1181.1,851.8 1181.4,859.4 1181.8,870.8 1182.1,897.9 1182.4,864.3 1182.7,843.5 1183.0,817.4 1183.3,839.8 1183.6,895.1 1184.0,886.0 1184.3,886.0 1184.6,834.7 1184.9,832.4 1185.2,838.4 1185.5,834.0 1185.8,870.7 1186.1,852.6 1186.4,846.2 1186.7,901.6 1187.0,944.5 1187.4,907.0 1187.7,902.7 1188.0,867.4 1188.3,869.4 1188.6,863.6 1188.9,943.0 1189.2,875.8 1189.5,857.0 1189.8,832.1 1190.1,870.4 1190.4,843.3 1190.7,897.9 1191.0,869.7 1191.3,888.3 1191.6,893.6 1191.9,854.5 1192.2,858.1 1192.5,839.8 1192.8,859.3 1193.1,857.6 1193.4,854.9 1193.7,850.7 1194.0,803.4 1194.3,815.4 1194.6,905.4 1194.9,905.9 1195.2,832.7 1195.5,833.6 1195.8,823.1 1196.0,840.1 1196.3,854.1 1196.6,954.3 1196.9,898.5 1197.2,941.4 1197.5,975.0 1197.8,928.4 1198.1,867.5 1198.4,849.1 1198.7,855.3 1199.0,874.1 1199.2,878.3 1199.5,868.2 1199.8,807.2 1200.1,765.6 1200.4,676.2 1200.7,782.1 1201.0,815.0 1201.3,798.5 1201.5,816.9 1201.8,854.6 1202.1,975.0 1202.4,824.4 1202.7,878.9 1203.0,839.7 1203.3,929.9 1203.5,975.0 1203.8,933.8 1204.1,830.8 1204.4,897.8 1204.7,824.5 1204.9,796.5 1205.2,835.9 1205.5,818.9 1205.8,865.1 1206.1,827.0 1206.3,824.2 1206.6,825.5 1206.9,815.8 1207.2,813.2 1207.5,829.1 1207.7,809.2 1208.0,823.0 1208.3,826.5 1208.6,793.2 1208.8,807.6 1209.1,794.0 1209.4,793.1 1209.7,813.4 1209.9,826.4 1210.2,824.6 1210.5,867.6 1210.8,948.3 1211.0,899.8 1211.3,975.0 1211.6,866.7 1211.8,884.8 1212.1,905.5 1212.4,923.9 1212.7,921.2 1212.9,878.7 1213.2,864.8 1213.5,840.1 1213.7,863.1 1214.0,878.2 1214.3,888.4 1214.5,966.4 1214.8,860.0 1215.1,870.6 1215.3,855.0 1215.6,817.0 1215.9,809.0 1216.1,794.2 1216.4,812.4 1216.7,817.2 1216.9,855.2 1217.2,954.8 1217.5,939.3 1217.7,927.9 1218.0,927.2 1218.3,908.6 1218.5,870.8 1218.8,913.2 1219.0,860.3 1219.3,835.4 1219.6,850.9 1219.8,838.5 1220.1,832.1 1220.3,838.5 1220.6,860.9 1220.9,859.3 1221.1,882.4 1221.4,842.3 1221.6,890.8 1221.9,821.9 1222.2,878.7 1222.4,884.6 1222.7,853.2 1222.9,873.2 1223.2,856.3 1223.4,837.1 1223.7,837.4 1224.0,829.2 1224.2,828.3 1224.5,821.3 1224.7,842.7 1225.0,837.9 1225.2,893.7 1225.5,830.8 1225.7,848.4 1226.0,904.5 1226.2,945.8 1226.5,867.5 1226.8,845.2 1227.0,798.7 1227.3,848.4 1227.5,809.8 1227.8,819.6 1228.0,909.9 1228.3,943.9 1228.5,930.7 1228.8,855.8 1229.0,809.3 1229.3,820.1 1229.5,817.6 1229.8,843.0 1230.3,859.1 1230.5,827.2 1230.7,855.0 1231.0,856.7 1231.2,957.0 1231.5,955.4 1231.7,955.4 1232.0,851.4 1232.2,838.0 1232.5,824.2 1232.7,836.8 1233.0,892.6 1233.2,888.4 1233.4,900.8 1233.7,906.5 1233.9,871.8 1234.2,855.0 1234.4,891.6 1234.7,914.1 1234.9,879.7 1235.1,836.3 1235.4,822.6 1235.6,870.1 1235.9,907.3 1236.1,937.2 1236.4,936.1 1236.6,904.9 1236.8,908.1 1237.1,894.6 1237.3,858.1 1237.6,892.2 1237.8,872.0 1238.0,959.9 1238.3,899.7 1238.5,913.1 1239.0,827.3 1239.2,833.3 1239.5,836.1 1239.7,847.7 1239.9,854.6 1240.2,804.9 1240.4,820.0 1240.6,765.0 1240.9,784.2 1241.1,800.7 1241.3,781.1 1241.6,789.4 1241.8,815.4 1242.0,862.4 1242.3,827.6 1242.5,842.1 1243.0,833.3 1243.2,812.7 1243.4,809.8 1243.7,808.0 1243.9,804.0 1244.1,799.5 1244.4,783.2 1244.6,810.5 1244.8,815.8 1245.1,826.2 1245.3,846.8 1245.5,894.1 1245.7,941.0 1246.2,975.0 1246.4,890.5 1246.7,909.9 1246.9,864.5 1247.1,859.6 1247.4,808.0 1247.6,809.7 1247.8,824.0 1248.3,847.8 1248.5,859.4 1248.7,898.5 1248.9,895.0 1249.2,901.3 1249.4,900.8 1249.6,929.3 1249.8,852.2 1250.1,831.6 1250.3,857.7 1250.7,819.0 1251.0,853.4 1251.2,895.5 1251.4,975.0 1251.6,895.9 1251.9,902.4 1252.1,849.4 1252.3,844.8 1252.5,894.2 1252.7,862.8 1253.2,868.0 1253.4,975.0 1253.6,909.2 1253.8,902.4 1254.1,887.0 1254.3,845.5 1254.5,854.4 1254.7,832.0 1255.2,823.0 1255.4,862.0 1255.6,879.1 1255.8,890.2 1256.0,838.6 1256.3,790.3 1256.7,828.8 1256.9,866.2 1257.1,874.7 1257.3,898.4 1257.6,813.3 1257.8,831.9 1258.2,854.4 1258.4,721.5 1258.6,634.8 1258.9,743.5 1259.1,862.0 1259.3,846.2 1259.5,954.2 1259.7,975.0 1260.1,935.0 1260.4,975.0 1260.6,931.8 1261.0,829.0 1261.2,802.4 1261.4,797.3 1261.6,815.1 1261.8,820.5 1262.1,817.0 1262.5,831.2 1262.7,835.5 1262.9,898.1 1263.1,975.0 1263.3,969.3 1263.5,875.3 1264.0,808.3 1264.2,850.8 1264.4,827.8 1264.6,874.5 1264.8,828.0 1265.2,831.5 1265.4,856.6 1265.6,841.1 1265.8,849.6 1266.0,930.9 1266.5,914.5 1266.7,852.0 1266.9,857.0 1267.1,886.6 1267.5,834.5 1267.7,838.8 1267.9,846.5 1268.1,939.3 1268.3,852.0 1268.5,850.3 1268.7,819.2 1269.1,811.8 1269.3,914.3 1269.5,879.3 1269.7,936.4 1270.2,828.9 1270.4,819.6 1270.6,838.5 1271.0,975.0 1271.2,886.3 1271.4,875.1 1271.6,833.9 1271.8,812.1 1272.2,836.3 1272.4,860.1 1272.6,843.9 1272.8,837.5 1273.2,853.1 1273.4,909.9 1273.8,913.5 1274.0,847.8 1274.2,851.9 1274.4,826.8 1274.8,955.7 1275.0,853.7 1275.2,888.6 1275.4,900.0 1275.8,806.4 1276.0,823.8 1276.2,853.3 1276.4,866.8 1276.6,823.7 1276.8,837.2 1277.2,897.6 1277.4,870.6 1277.5,813.6 1277.9,889.1 1278.1,975.0 1278.3,911.5 1278.5,975.0 1278.9,851.4 1279.1,911.8 1279.3,908.8 1279.5,892.3 1279.9,831.9 1280.1,807.3 1280.5,855.9 1280.7,842.0 1280.9,832.1 1281.0,858.2 1281.2,916.8 1281.6,884.5 1281.8,926.8 1282.0,887.1 1282.4,824.0 1282.6,818.8 1283.0,831.1 1283.2,836.6 1283.3,830.7 1283.5,846.1 1283.9,898.7 1284.1,886.2 1284.5,808.1 1284.7,820.0 1284.9,808.6 1285.2,823.3 1285.4,850.8 1285.6,839.0 1285.8,846.5 1286.2,828.1 1286.4,882.4 1286.6,866.1 1286.9,932.3 1287.1,880.0 1287.3,936.2 1287.5,910.3 1287.9,818.9 1288.2,828.4 1288.4,802.9 1288.6,819.2 1289.0,828.9 1289.2,847.2 1289.4,824.3 1289.7,809.0 1289.9,789.5 1290.3,807.7 1290.5,790.6 1290.7,816.9 1290.8,857.9 1291.2,885.1 1291.4,855.6 1291.8,879.3 1291.9,975.0 1292.1,923.9 1292.5,958.3 1292.7,880.4 1292.8,929.6 1293.0,857.0 1293.2,905.8 1293.6,877.6 1293.8,928.2 1294.3,952.2 1294.5,836.3 1294.7,839.9 1294.8,846.9 1295.0,897.8 1295.4,858.4 1295.6,844.7 1295.7,833.2 1296.1,926.1 1296.3,867.3 1296.6,899.9 1297.0,837.9 1297.2,828.0 1297.3,857.4 1297.5,878.9 1297.7,859.9 1298.1,926.1 1298.2,975.0 1298.8,868.6 1298.9,840.6 1299.3,848.7 1299.5,875.6 1299.8,975.0 1300.0,866.4 1300.2,876.6 1300.3,905.7 1300.7,843.4 1300.9,856.8 1301.0,838.8 1301.2,831.4 1301.7,835.7 1301.9,912.6 1302.1,841.0 1302.4,942.0 1302.8,921.2 1303.0,878.3 1303.1,901.2 1303.5,855.8 1303.8,713.0 1304.0,824.4 1304.2,874.9 1304.3,844.2 1304.5,818.2 1304.7,808.7 1305.0,794.9 1305.4,846.8 1305.5,830.8 1305.9,975.0 1306.0,905.5 1306.4,839.0 1306.6,834.8 1306.9,872.1 1307.1,870.2 1307.2,893.3 1307.6,847.6 1307.9,869.8 1308.1,846.6 1308.3,943.2 1308.8,839.6 1308.9,883.6 1309.1,829.7 1309.3,837.1 1309.6,847.3 1309.9,888.7 1310.1,873.1 1310.3,845.4 1310.8,903.2 1310.9,871.3 1311.1,836.3 1311.4,874.6 1311.8,878.1 1311.9,845.8 1312.1,854.9 1312.4,874.1 1312.8,888.2 1312.9,975.0 1313.2,934.1 1313.4,847.0 1313.6,827.7 1313.9,883.6 1314.1,938.3 1314.4,861.7 1314.6,923.0 1314.9,971.0 1315.2,941.7 1315.4,851.5 1315.5,854.1 1315.9,823.4 1316.0,803.4 1316.3,849.7 1316.5,883.8 1316.7,952.0 1317.2,900.7 1317.5,812.8 1317.6,793.1 1317.8,777.1 1318.3,792.6 1318.4,814.9 1318.6,815.8 1318.9,879.8 1319.2,886.6 1319.4,975.0 1319.6,876.7 1319.7,870.3 1320.0,897.0 1320.4,920.9 1320.7,848.9 1320.8,874.4 1321.1,931.5 1321.5,829.1 1321.8,930.0 1321.9,839.3 1322.1,848.0 1322.3,837.4 1322.6,832.4 1322.9,870.5 1323.0,962.5 1323.4,880.9 1323.5,908.4 1324.0,816.4 1324.1,825.5 1324.4,870.4 1324.8,879.1 1324.9,867.7 1325.2,956.6 1325.4,868.2 1325.8,935.0 1326.0,916.3 1326.1,892.5 1326.3,875.2 1326.6,837.1 1326.9,810.5 1327.1,812.1 1327.2,794.5 1327.5,824.7 1327.7,803.9 1328.1,802.0 1328.4,828.5 1328.6,849.9 1328.8,919.1 1329.1,879.2 1329.2,831.2 1329.5,779.9 1330.0,825.5 1330.1,856.9 1330.3,869.4 1330.7,884.7 1330.9,822.6 1331.0,839.5 1331.5,910.3 1331.6,891.6 1331.8,939.9 1332.2,907.1 1332.4,884.4 1332.7,845.8 1333.0,925.6 1333.3,832.6 1333.4,898.3 1333.6,885.1 1333.9,845.1 1334.2,851.1 1334.3,964.8 1334.6,975.0 1334.8,866.6 1335.1,882.9 1335.5,807.7 1335.8,839.6 1335.9,813.8 1336.2,790.5 1336.4,804.9 1336.5,769.7 1337.0,866.0 1337.3,861.2 1337.4,885.8 1337.5,912.3 1338.0,948.7 1338.3,958.8 1338.4,897.4 1338.6,899.8 1338.7,850.1 1339.0,840.0 1339.4,799.6 1339.7,834.9 1339.9,793.7 1340.3,801.4 1340.4,840.6 1340.7,889.6 1340.9,975.0 1341.0,906.8 1341.3,831.5 1341.6,848.5 1341.7,933.9 1342.0,884.6 1342.3,841.3 1342.6,829.3 1342.9,896.0 1343.3,907.8 1343.4,831.2 1343.6,836.7 1343.7,803.8 1344.0,790.9 1344.3,825.8 1344.6,809.4 1345.0,862.3 1345.1,848.5 1345.3,975.0 1345.6,852.3 1346.0,791.4 1346.1,878.1 1346.4,975.0 1346.5,917.2 1346.8,836.3 1347.2,861.2 1347.4,890.0 1347.6,888.5 1347.9,829.9 1348.1,808.7 1348.2,867.0 1348.6,821.6 1348.8,782.7 1349.0,802.9 1349.4,922.7 1349.7,872.8 1349.9,831.9 1350.3,916.8 1350.4,884.8 1350.7,923.7 1350.8,840.9 1351.2,907.6 1351.4,845.0 1351.8,843.1 1351.9,902.7 1352.2,930.1 1352.4,827.1 1352.7,818.6 1353.0,867.9 1353.3,960.5 1353.4,859.4 1353.5,878.4 1353.9,975.0 1354.1,871.8 1354.3,830.0 1354.6,882.2 1354.9,783.7 1355.0,785.8 1355.4,855.9 1355.5,849.1 1355.8,913.2 1356.2,880.3 1356.5,850.3 1356.6,965.3 1356.7,894.8 1357.0,918.3 1357.4,853.2 1357.5,870.0 1357.9,960.8 1358.2,963.3 1358.5,881.2 1358.7,820.1 1359.0,837.4 1359.1,848.7 1359.4,946.0 1359.5,885.2 1359.6,815.5 1360.2,824.5 1360.3,859.2 1360.7,944.1 1360.8,861.5 1361.2,955.4 1361.5,815.9 1361.6,822.6 1362.0,794.0 1362.1,835.1 1362.4,811.4 1362.6,889.0 1362.9,934.9 1363.3,822.1 1363.4,841.0 1363.7,808.2 1363.9,847.7 1364.0,824.4 1364.3,975.0 1364.5,841.6 1364.9,819.0 1365.2,975.0 1365.4,872.3 1365.6,940.0 1365.7,844.6 1366.2,900.9 1366.5,834.3 1366.6,818.0 1366.8,860.6 1367.1,819.0 1367.3,872.1 1367.6,893.4 1368.0,797.6 1368.3,776.7 1368.5,825.5 1368.6,844.5 1368.8,927.7 1369.1,902.1 1369.3,856.4 1369.6,901.0 1370.0,836.5 1370.2,803.5 1370.3,869.6 1370.8,881.1 1371.0,924.0 1371.3,895.8 1371.4,838.7 1371.7,838.1 1371.8,975.0 1372.3,820.5 1372.4,795.9 1372.6,783.1 1372.9,814.7 1373.0,881.3 1373.3,833.1 1373.5,780.6 1373.8,814.2 1374.0,799.1 1374.1,906.0 1374.5,808.4 1375.0,975.0 1375.2,858.5 1375.5,816.0 1375.7,852.3 1376.0,816.3 1376.2,765.2 1376.4,801.9 1376.7,930.2 1376.9,844.8 1377.0,862.6 1377.4,782.6 1377.6,812.7 1377.8,846.8 1378.0,867.9 1378.2,811.8 1378.6,848.4 1378.8,892.6 1379.1,919.4 1379.3,826.1 1379.7,801.7 1379.9,840.3 1380.3,866.2 1380.4,813.1 1380.6,823.8 1381.0,860.1 1381.1,923.9 1381.3,835.4 1381.6,856.0 1381.9,837.1 1382.3,810.1 1382.5,909.0 1382.7,827.6 1383.0,782.6 1383.1,784.6 1383.4,894.8 1383.5,843.4 1383.9,962.8 1384.0,887.6 1384.4,810.4 1384.7,842.4 1384.8,964.9 1385.2,926.5 1385.3,862.8 1385.9,808.7 1386.0,839.8 1386.1,809.9 1386.2,903.8 1386.7,968.1 1386.8,828.8 1387.1,975.0 1387.3,878.4 1387.7,861.9 1387.9,817.3 1388.1,849.7 1388.2,791.4 1388.6,813.6 1388.8,912.8 1389.2,936.0 1389.4,854.5 1389.6,825.4 1389.8,882.3 1390.2,816.5 1390.4,891.8 1390.5,949.9 1391.0,832.8 1391.1,841.9 1391.2,815.0 1391.9,806.2 1392.0,847.6 1392.1,798.1 1392.4,863.5 1392.5,869.6 1392.6,972.8 1393.2,816.8 1393.4,908.7 1393.5,972.9 1393.8,829.9 1394.1,808.1 1394.4,917.6 1394.8,975.0 1395.0,870.4 1395.2,844.1 1395.5,932.6 1395.6,942.2 1395.8,815.1 1396.2,861.6 1396.5,782.8 1396.7,792.1 1396.9,838.6 1397.1,877.1 1397.5,791.2 1397.7,772.3 1397.9,817.3 1398.2,925.7 1398.3,852.6 1398.5,881.5 1398.8,944.3 1399.2,833.7 1399.4,861.4 1399.5,826.6 1399.8,956.9 1400.3,812.8 1400.5,875.1 1400.8,816.9 1400.9,863.9 1401.1,914.2 1401.4,797.0 1401.6,879.8 1402.0,806.9 1402.2,757.0 1402.5,799.5 1402.6,926.6 1402.7,862.1 1403.0,854.9 1403.3,958.3 1403.7,856.9 1404.0,834.7 1404.2,801.5 1404.4,861.9 1404.6,841.1 1404.9,946.4 1405.1,809.8 1405.4,859.7 1405.5,871.7 1405.6,833.0 1406.2,975.0 1406.5,910.2 1406.6,846.9 1406.9,820.6 1407.2,873.0 1407.3,812.8 1407.5,975.0 1407.8,824.3 1408.1,843.2 1408.2,888.0 1408.5,819.1 1408.9,914.7 1409.2,971.3 1409.5,848.2 1409.6,893.5 1409.9,817.6 1410.1,810.7 1410.5,970.4 1410.7,818.5 1410.9,909.2 1411.1,925.3 1411.4,853.7 1411.5,857.5 1411.9,805.2 1412.0,824.5 1412.4,975.0 1412.5,962.1 1412.7,843.8 1413.0,874.2 1413.4,784.7 1413.6,782.0 1413.9,824.8 1414.0,801.7 1414.4,957.9 1414.6,922.4 1414.7,839.7 1415.0,861.8 1415.4,805.6 1415.6,805.3 1415.9,893.1 1416.0,897.3 1416.4,814.8 1416.5,801.3 1416.8,891.7 1417.2,892.5 1417.5,975.0 1417.6,975.0 1417.9,872.1 1418.1,873.2 1418.5,802.6 1418.6,821.0 1419.0,879.8 1419.2,818.6 1419.4,898.2 1419.6,874.9 1419.8,933.5 1420.0,935.0 1420.4,808.3 1420.5,870.5 1421.0,808.1 1421.1,818.1 1421.5,940.5 1421.6,942.0 1421.7,838.5 1422.1,830.6 1422.2,880.9 1422.5,932.6 1422.7,850.4 1423.2,827.5 1423.4,907.9 1423.6,856.5 1423.7,957.2 1424.1,885.6 1424.2,849.6 1424.5,882.3 1424.9,975.0 1425.3,951.9 1425.5,900.3 1425.6,928.3 1426.0,845.8 1426.0,859.0 1426.1,818.5 1426.6,813.7 1426.9,910.1 1427.1,853.2 1427.5,931.8 1427.6,975.0 1427.9,840.2 1428.0,821.5 1428.4,884.9 1428.7,830.8 1428.9,892.3 1429.0,965.3 1429.4,805.7 1429.8,812.1 1429.9,849.5 1430.2,915.8 1430.2,880.3 1430.6,818.8 1430.9,952.5 1431.2,880.3 1431.3,811.7 1431.5,913.8 1432.0,825.6 1432.1,849.7 1432.4,975.0 1432.8,975.0 1432.9,887.6 1433.1,860.2 1433.4,938.3 1433.5,929.8 1434.0,872.4 1434.1,895.7 1434.4,830.6 1434.8,975.0 1435.0,855.6 1435.1,864.4 1435.3,956.7 1435.6,875.0 1435.7,948.4 1436.1,887.7 1436.2,975.0 1436.5,975.0 1436.8,806.8 1437.1,851.0 1437.2,892.7 1437.7,975.0 1437.9,817.3 1438.0,814.7 1438.4,925.7 1438.6,966.0 1438.9,878.7 1439.2,790.2 1439.4,920.3 1439.6,863.9 1440.0,915.3 1440.1,888.2 1440.4,804.4 1440.5,818.1 1440.8,975.0 1441.2,909.7 1441.3,842.9 1441.6,843.6 1441.8,814.0 1442.2,824.0 1442.4,901.9 1442.5,975.0 1442.7,829.4 1443.0,819.8 1443.4,876.5 1443.6,897.2 1443.9,816.5 1444.1,831.7 1444.4,950.9 1444.6,907.6 1444.8,861.2 1445.2,975.0 1445.4,803.1 1445.5,799.9 1445.8,856.8 1446.0,825.7 1446.5,912.5 1446.5,859.1 1446.8,932.5 1447.1,932.9 1447.5,860.2 1447.7,964.7 1447.9,820.7 1448.2,934.6 1448.5,804.4 1448.6,804.4 1448.8,845.3 1449.2,847.1 1449.3,791.0 1449.6,787.4 1449.8,937.8 1450.2,811.7 1450.4,897.7 1450.7,824.1 1450.9,875.6 1451.0,903.9 1451.3,808.5 1451.7,884.0 1451.9,811.7 1452.0,806.1 1452.1,902.5 1452.6,829.9 1452.7,975.0 1453.1,965.3 1453.5,833.1 1453.7,833.1 1453.9,945.8 1454.3,863.3 1454.4,975.0 1454.7,949.6 1455.0,813.5 1455.1,831.9 1455.4,975.0 1455.5,975.0 1455.9,846.4 1456.1,975.0 1456.4,828.5 1456.5,795.0 1456.8,932.7 1457.0,834.0 1457.4,975.0 1457.6,848.4 1457.9,813.3 1458.1,851.6 1458.3,975.0 1458.6,864.4 1458.8,936.1 1459.0,884.1 1459.3,782.5 1459.6,822.7 1459.7,892.3 1460.1,819.8 1460.3,880.5 1460.5,833.9 1460.8,768.7 1461.0,836.1 1461.2,954.1 1461.6,817.4 1461.8,969.6 1462.0,835.4 1462.3,796.4 1462.5,840.0 1462.9,975.0 1463.1,948.1 1463.4,834.4 1463.5,831.5 1463.9,970.8 1464.2,920.4 1464.5,817.7 1464.5,800.1 1464.9,933.8 1465.2,827.8 1465.5,967.2 1465.7,899.5 1465.9,942.5 1466.2,802.2 1466.5,975.0 1466.6,897.0 1466.8,975.0 1467.2,949.6 1467.4,827.5 1467.6,797.5 1467.9,918.0 1468.3,817.8 1468.5,899.0 1468.6,879.1 1468.8,830.6 1469.1,975.0 1469.4,821.7 1469.7,892.2 1470.0,813.1 1470.1,840.2 1470.4,924.5 1470.5,972.7 1470.9,836.7 1471.1,975.0 1471.4,845.0 1471.8,866.4 1472.0,929.5 1472.0,959.8 1472.4,804.7 1472.6,826.1 1472.7,975.0 1473.2,864.1 1473.4,975.0 1473.8,920.1 1474.0,843.4 1474.2,972.5 1474.4,819.1 1474.6,974.3 1474.9,807.6 1475.0,853.3 1475.5,940.4 1475.5,904.3 1475.8,778.5 1476.0,810.3 1476.3,909.4 1476.6,975.0 1476.9,838.8 1477.2,802.8 1477.4,880.6 1477.5,824.9 1478.0,907.5 1478.4,812.8 1478.5,871.3 1478.5,846.0 1478.8,975.0 1479.0,848.4 1479.5,975.0 1479.8,968.8 1479.9,872.3 1480.1,919.8 1480.3,863.0 1480.9,814.4 1481.0,922.7 1481.1,919.9 1481.5,809.8 1481.8,975.0 1481.9,839.0 1482.1,874.5 1482.5,789.5 1482.6,794.7 1483.0,871.6 1483.1,908.7 1483.5,843.7 1483.6,825.6 1484.0,955.4 1484.1,975.0 1484.5,841.8 1484.9,819.9 1485.0,857.9 1485.1,913.0 1485.3,822.7 1485.6,975.0 1486.0,859.1 1486.1,808.3 1486.4,914.3 1486.7,924.3 1486.9,843.0 1487.1,819.8 1487.5,927.8 1487.8,942.8 1487.9,832.2 1488.0,841.8 1488.5,931.0 1488.5,907.0 1488.8,804.3 1489.0,846.4 1489.2,923.1 1489.7,918.6 1489.9,832.2 1490.1,940.9 1490.4,820.7 1490.5,832.1 1490.9,975.0 1491.1,964.0 1491.4,796.1 1491.6,816.0 1491.7,878.8 1492.2,853.1 1492.4,975.0 1492.5,865.2 1492.6,975.0 1493.2,971.0 1493.3,869.6 1493.7,957.6 1493.9,854.4 1494.1,829.2 1494.5,920.2 1494.6,889.4 1494.8,826.9 1495.0,894.8 1495.1,810.4 1495.6,815.2 1495.9,961.6 1496.1,931.8 1496.4,851.4 1496.5,838.7 1496.9,946.1 1497.1,909.0 1497.3,830.2 1497.7,948.2 1497.9,811.8 1498.1,806.3 1498.4,975.0 1498.5,828.6 1498.9,896.2 1499.0,800.2 1499.4,928.5 1499.6,975.0 1499.8,861.3 1500.3,957.6 1500.4,814.7 1500.7,815.2 1500.9,946.0 1501.1,947.9 1501.3,838.5 1501.5,890.1 1501.7,796.1 1502.1,975.0 1502.4,811.0 1502.6,795.0 1503.0,938.0 1503.2,834.4 1503.4,975.0 1503.5,906.4 1504.0,851.0 1504.1,892.2 1504.2,839.5 1504.6,824.1 1504.9,881.7 1505.2,878.8 1505.3,803.2 1505.6,917.5 1505.8,829.2 1506.2,794.4 1506.5,944.6 1506.7,951.7 1506.8,869.3 1507.0,836.4 1507.1,975.0 1507.6,975.0 1508.0,867.1 1508.2,889.5 1508.5,784.1 1508.6,794.2 1508.9,873.3 1509.4,816.1 1509.5,875.0 1509.7,923.8 1509.7,831.9 1510.3,846.5 1510.4,952.7 1510.6,801.4 1510.9,975.0 1511.2,975.0 1511.4,806.2 1511.7,798.1 1511.8,927.0 1512.1,831.2 1512.5,913.2 1512.5,862.7 1512.8,811.3 1513.1,843.1 1513.4,975.0 1513.6,955.9 1513.8,806.1 1514.1,893.2 1514.5,817.3 1514.7,952.7 1514.9,828.5 1515.2,910.8 1515.4,788.5 1515.5,830.0 1515.7,975.0 1516.1,975.0 1516.2,870.5 1516.6,897.2 1517.0,798.5 1517.2,893.3 1517.5,799.8 1517.6,809.8 1518.0,975.0 1518.2,831.3 1518.5,975.0 1518.5,911.6 1518.9,804.1 1519.0,793.9 1519.1,921.5 1519.6,975.0 1519.8,885.1 1520.1,914.3 1520.2,809.2 1520.6,975.0 1520.8,839.4 1521.0,975.0 1521.4,829.3 1521.6,975.0 1521.8,811.9 1522.0,836.3 1522.2,948.1 1522.6,802.7 1522.7,975.0 1523.1,975.0 1523.4,817.4 1523.5,813.9 1523.6,975.0 1524.3,975.0 1524.5,793.7 1524.6,801.1 1524.7,943.7 1525.2,975.0 1525.3,812.1 1525.7,811.3 1525.9,868.2 1526.2,843.6 1526.5,975.0 1526.8,903.6 1527.0,811.8 1527.2,963.2 1527.4,832.7 1527.6,807.7 1527.9,884.6 1528.1,908.3 1528.2,813.9 1528.5,975.0 1528.7,829.9 1529.0,975.0 1529.2,801.9 1529.5,822.3 1529.9,975.0 1530.3,813.1 1530.4,975.0 1530.5,945.2 1530.9,774.8 1531.0,777.5 1531.2,975.0 1531.6,794.3 1531.8,975.0 1532.1,842.5 1532.3,975.0 1532.8,846.6 1532.9,975.0 1533.0,903.7 1533.3,812.7 1533.6,884.1 1534.0,827.2 1534.0,832.1 1534.4,975.0 1534.7,795.4 1534.8,975.0 1535.2,922.4 1535.4,817.7 1535.5,812.4 1536.0,959.8 1536.0,975.0 1536.3,831.8 1536.5,975.0 1537.0,823.4 1537.1,902.0 1537.4,795.8 1537.8,975.0 1538.0,865.1 1538.0,878.8 1538.1,805.0 1538.8,817.5 1538.9,975.0 1539.3,801.9 1539.5,973.1 1539.5,914.3 1540.0,815.2 1540.0,815.0 1540.3,878.4 1540.5,817.3 1540.9,929.8 1541.1,855.2 1541.2,975.0 1541.6,823.1 1541.7,975.0 1542.1,975.0 1542.5,829.6 1542.5,885.5 1542.9,797.1 1543.2,936.9 1543.4,780.4 1543.6,778.7 1543.7,846.2 1544.0,845.9 1544.3,975.0 1544.6,872.4 1544.7,975.0 1545.3,815.9 1545.5,958.9 1545.8,924.7 1545.8,818.1 1546.2,961.3 1546.3,862.9 1546.6,804.2 1546.8,949.6 1547.2,836.5 1547.4,964.7 1547.5,830.1 1547.9,959.3 1548.0,891.5 1548.1,828.9 1548.6,949.9 1548.9,809.7 1549.2,931.9 1549.4,823.5 1549.5,923.6 1549.7,833.9 1550.2,975.0 1550.4,816.1 1550.7,817.8 1550.9,975.0 1551.0,822.4 1551.5,975.0 1551.7,964.2 1551.9,810.7 1552.0,906.2 1552.4,821.3 1552.7,782.8 1552.9,975.0 1553.0,849.9 1553.2,975.0 1553.7,975.0 1554.0,801.5 1554.2,812.5 1554.5,877.3 1554.6,816.4 1554.7,973.7 1555.3,930.8 1555.5,816.3 1555.5,791.6 1555.8,915.1 1556.0,811.5 1556.3,918.4 1556.6,975.0 1557.0,869.5 1557.0,975.0 1557.1,870.1 1557.5,975.0 1557.8,811.2 1558.3,817.7 1558.4,975.0 1558.6,815.5 1558.8,975.0 1559.1,800.0 1559.5,975.0 1559.6,842.2 1559.9,975.0 1560.1,975.0 1560.3,841.9 1560.8,799.6 1561.0,933.8 1561.0,975.0 1561.3,810.5 1561.6,852.4 1561.9,975.0 1562.0,975.0 1562.4,807.7 1562.7,926.0 1562.9,818.6 1563.2,831.1 1563.4,975.0 1563.5,975.0 1563.7,839.7 1564.0,816.9 1564.2,954.1 1564.5,975.0 1565.0,813.9 1565.2,908.0 1565.4,816.2 1565.6,818.3 1565.8,971.6 1566.1,760.3 1566.3,888.3 1566.7,961.6 1566.9,805.5 1567.2,832.1 1567.5,941.2 1567.8,819.6 1568.0,941.9 1568.1,975.0 1568.5,840.9 1568.6,975.0 1568.9,800.7 1569.0,832.5 1569.3,947.9 1569.7,967.1 1569.8,852.7 1570.3,815.5 1570.4,888.6 1570.5,886.5 1570.7,804.7 1571.2,954.8 1571.4,834.8 1571.6,975.0 1572.0,846.9 1572.4,823.4 1572.5,975.0 1572.6,975.0 1572.9,867.1 1573.1,975.0 1573.2,824.5 1573.7,864.6 1573.8,975.0 1574.0,871.7 1574.3,777.5 1574.6,975.0 1574.8,825.1 1575.2,818.2 1575.4,918.3 1575.7,834.4 1575.9,975.0 1576.0,975.0 1576.2,922.3 1576.6,972.1 1576.9,818.7 1577.2,828.4 1577.4,897.0 1577.5,833.4 1577.6,952.9 1578.0,975.0 1578.3,870.9 1578.7,975.0 1579.0,820.8 1579.1,975.0 1579.5,833.6 1579.5,794.5 1579.8,975.0 1580.3,975.0 1580.5,830.3 1580.8,940.9 1580.9,815.4 1581.0,811.4 1581.4,916.3 1581.6,975.0 1581.8,788.8 1582.1,975.0 1582.5,807.5 1582.6,791.0 1583.0,909.8 1583.0,909.0 1583.2,807.8 1583.7,962.7 1583.9,842.4 1584.1,975.0 1584.2,837.2 1584.6,832.0 1584.8,975.0 1585.3,963.4 1585.4,831.2 1585.8,814.8 1585.9,975.0 1586.2,814.1 1586.4,932.0 1586.7,975.0 1586.9,828.3 1587.3,812.2 1587.4,924.3 1587.8,823.6 1588.0,972.8 1588.0,975.0 1588.4,827.6 1588.5,833.8 1588.9,922.7 1589.1,766.7 1589.5,835.4 1589.6,945.2 1589.9,801.1 1590.1,975.0 1590.4,831.0 1590.6,837.1 1590.8,975.0 1591.1,920.6 1591.4,783.9 1591.5,813.4 1591.7,975.0 1592.0,949.3 1592.3,830.6 1592.7,915.2 1592.9,811.3 1593.2,810.4 1593.3,960.1 1593.6,975.0 1593.9,813.1 1594.1,804.2 1594.2,975.0 1594.6,818.5 1594.9,934.1 1595.1,922.9 1595.3,816.7 1595.5,829.4 1595.8,975.0 1596.1,975.0 1596.3,824.2 1596.6,800.0 1596.8,867.8 1597.0,842.9 1597.4,975.0 1597.7,817.7 1597.9,975.0 1598.1,975.0 1598.4,870.8 1598.5,975.0 1598.9,831.1 1599.1,969.6 1599.3,803.8 1599.6,975.0 1599.9,841.2 1600.0,915.5 1600.5,788.4 1600.9,966.2 1601.0,843.7 1601.1,839.0 1601.4,975.0 1601.7,889.7 1601.8,815.8 1602.0,804.5 1602.4,963.9 1602.7,975.0 1602.9,856.8 1603.1,975.0 1603.5,832.9 1603.5,798.7 1603.7,975.0 1604.1,966.2 1604.2,834.1 1604.6,836.5 1604.9,975.0 1605.1,975.0 1605.4,840.0 1605.5,833.5 1605.8,975.0 1606.0,975.0 1606.4,863.9 1606.6,965.6 1606.7,832.4 1607.1,921.0 1607.2,834.7 1607.5,944.6 1607.7,840.2 1608.0,842.3 1608.3,975.0 1608.8,869.1 1609.0,975.0 1609.2,975.0 1609.4,825.7 1609.7,975.0 1609.8,816.5 1610.2,975.0 1610.5,827.3 1610.7,801.5 1610.8,975.0 1611.0,975.0 1611.5,847.4 1611.5,832.3 1611.6,975.0 1612.1,975.0 1612.5,847.7 1612.6,975.0 1612.7,827.2 1613.0,975.0 1613.5,820.5 1613.8,826.1 1614.0,975.0 1614.1,807.4 1614.3,975.0 1614.6,898.6 1614.9,795.3 1615.0,951.0 1615.3,801.5 1615.5,821.8 1616.0,951.8 1616.1,849.4 1616.2,975.0 1616.8,958.9 1617.0,808.8 1617.2,933.3 1617.4,798.2 1617.6,785.1 1617.8,945.0 1618.0,827.8 1618.2,975.0 1618.6,975.0 1618.6,832.1 1619.2,843.3 1619.4,975.0 1619.6,883.3 1620.0,821.4 1620.1,975.0 1620.5,832.3 1620.6,865.1 1620.7,975.0 1621.0,975.0 1621.4,818.1 1621.7,879.5 1621.8,820.4 1622.0,860.7 1622.3,975.0 1622.8,975.0 1623.0,816.7 1623.3,815.0 1623.5,960.3 1623.5,975.0 1623.6,820.5 1624.0,975.0 1624.4,844.5 1624.5,942.4 1624.9,764.2 1625.1,975.0 1625.4,767.2 1625.6,845.6 1625.9,975.0 1626.3,829.9 1626.4,968.6 1626.6,796.3 1626.9,975.0 1627.2,975.0 1627.4,854.7 1627.7,839.6 1627.7,975.0 1628.2,975.0 1628.4,840.8 1628.6,975.0 1628.9,839.2 1629.2,804.1 1629.3,948.9 1629.5,820.3 1629.9,975.0 1630.2,789.0 1630.5,948.4 1630.6,957.1 1631.0,834.8 1631.2,797.3 1631.4,975.0 1631.6,975.0 1631.9,812.2 1632.0,809.5 1632.5,975.0 1632.7,975.0 1633.0,806.5 1633.1,806.8 1633.5,876.6 1633.5,904.4 1634.0,761.8 1634.0,794.1 1634.3,975.0 1634.8,924.6 1634.9,831.1 1635.1,975.0 1635.3,817.1 1635.6,835.3 1635.9,975.0 1636.0,975.0 1636.5,816.4 1636.6,803.7 1636.9,974.2 1637.3,962.6 1637.5,812.8 1637.7,813.5 1637.9,888.2 1638.3,833.6 1638.5,975.0 1638.6,782.2 1638.8,975.0 1639.1,830.4 1639.2,975.0 1639.6,975.0 1639.7,816.9 1640.0,975.0 1640.3,794.2 1640.5,949.9 1640.8,789.7 1641.0,836.5 1641.3,975.0 1641.5,809.1 1641.7,926.6 1642.2,975.0 1642.4,803.0 1642.7,975.0 1643.0,797.5 1643.0,843.2 1643.1,975.0 1643.6,975.0 1643.8,833.7 1644.2,975.0 1644.3,854.7 1644.5,975.0 1644.9,820.7 1645.0,828.1 1645.4,975.0 1645.8,946.8 1645.9,818.9 1646.0,896.5 1646.3,812.5 1646.6,846.2 1646.7,975.0 1647.1,813.2 1647.1,975.0 1647.8,852.8 1647.9,927.5 1648.2,975.0 1648.3,790.8 1648.5,975.0 1648.7,820.5 1649.0,975.0 1649.2,804.4 1649.5,971.0 1649.8,790.9 1650.2,975.0 1650.3,820.6 1650.8,795.9 1650.9,962.4 1651.3,808.5 1651.4,975.0 1651.5,975.0 1652.0,813.8 1652.0,789.3 1652.4,975.0 1652.6,847.8 1652.7,975.0 1653.2,962.3 1653.5,792.3 1653.6,975.0 1653.9,782.8 1654.1,787.5 1654.4,975.0 1654.8,967.0 1655.0,850.0 1655.0,819.0 1655.2,975.0 1655.7,806.1 1656.0,975.0 1656.3,975.0 1656.4,826.6 1656.7,821.3 1657.0,951.9 1657.1,871.5 1657.1,975.0 1657.8,943.2 1658.0,809.8 1658.0,793.0 1658.3,969.7 1658.6,814.7 1658.9,943.4 1659.2,975.0 1659.4,822.1 1659.7,817.7 1659.9,975.0 1660.2,975.0 1660.4,790.9 1660.6,819.5 1660.7,975.0 1661.2,975.0 1661.3,822.1 1661.8,795.0 1661.8,975.0 1662.1,975.0 1662.4,822.1 1662.6,975.0 1662.7,822.2 1663.1,975.0 1663.2,789.0 1663.5,800.1 1663.9,975.0 1664.2,836.1 1664.3,975.0 1664.8,813.5 1664.9,951.9 1665.2,975.0 1665.3,790.9 1665.5,900.5 1665.6,795.3 1666.2,975.0 1666.4,794.7 1666.7,782.3 1667.0,865.8 1667.1,975.0 1667.2,799.9 1667.5,975.0 1667.6,848.3 1668.1,975.0 1668.3,812.6 1668.8,813.0 1669.0,975.0 1669.2,975.0 1669.5,805.1 1669.6,800.7 1669.7,975.0 1670.3,975.0 1670.4,804.5 1670.5,807.6 1671.0,922.1 1671.1,975.0 1671.5,837.5 1671.6,975.0 1671.7,837.9 1672.1,827.5 1672.2,949.7 1672.8,832.5 1672.9,964.2 1673.1,975.0 1673.5,813.2 1673.7,804.5 1673.8,975.0 1674.1,975.0 1674.3,819.9 1674.5,975.0 1675.0,835.5 1675.0,975.0 1675.2,863.2 1675.5,975.0 1675.6,844.6 1676.2,975.0 1676.3,822.5 1676.6,975.0 1676.8,814.9 1677.0,811.5 1677.3,975.0 1677.6,806.2 1677.9,975.0 1678.1,975.0 1678.3,805.1 1678.7,975.0 1679.0,868.9 1679.0,975.0 1679.3,831.1 1679.6,806.0 1679.7,975.0 1680.0,975.0 1680.1,830.4 1680.7,826.7 1681.0,975.0 1681.0,781.0 1681.1,975.0 1681.5,815.7 1681.9,953.2 1682.2,975.0 1682.4,809.4 1682.6,923.4 1682.9,803.8 1683.3,821.7 1683.5,971.7 1683.5,975.0 1683.9,818.2 1684.1,975.0 1684.4,838.6 1684.6,965.2 1684.7,821.4 1685.0,850.1 1685.2,975.0 1685.7,798.9 1685.8,974.3 1686.4,809.0 1686.4,938.1 1686.6,975.0 1686.8,828.3 1687.1,975.0 1687.2,822.6 1687.7,975.0 1687.9,801.8 1688.4,796.5 1688.5,975.0 1688.6,833.3 1688.7,975.0 1689.1,975.0 1689.1,836.1 1689.6,975.0 1690.0,837.9 1690.1,819.7 1690.2,975.0 1690.6,957.9 1690.9,790.7 1691.4,796.3 1691.5,975.0 1691.5,975.0 1691.9,809.9 1692.1,820.0 1692.3,974.9 1692.5,809.4 1692.6,975.0 1693.0,975.0 1693.5,823.2 1693.6,975.0 1693.7,802.3 1694.0,807.3 1694.4,950.3 1694.7,827.1 1695.0,961.6 1695.1,975.0 1695.3,795.8 1695.7,810.8 1695.8,975.0 1696.0,975.0 1696.1,810.4 1696.6,975.0 1696.7,830.5 1697.4,838.1 1697.5,975.0 1697.6,975.0 1697.7,812.3 1698.0,825.6 1698.3,955.3 1698.6,806.8 1698.9,975.0 1699.0,975.0 1699.3,786.6 1699.5,975.0 1699.7,823.2 1700.1,975.0 1700.3,820.2 1700.5,808.7 1700.6,940.9 1701.1,975.0 1701.4,852.6 1701.6,975.0 1701.9,815.6 1702.1,791.9 1702.5,975.0 1702.7,975.0 1702.9,852.3 1703.0,975.0 1703.1,847.6 1703.7,828.7 1703.7,975.0 1704.1,800.8 1704.4,933.4 1704.5,975.0 1704.7,770.8 1705.1,975.0 1705.5,838.7 1705.8,786.3 1706.0,975.0 1706.3,975.0 1706.5,808.5 1706.6,954.5 1706.9,757.0 1707.0,833.5 1707.4,975.0 1707.8,795.4 1708.0,975.0 1708.0,975.0 1708.0,836.6 1708.7,954.2 1708.8,807.9 1709.0,824.5 1709.1,975.0 1709.6,975.0 1709.8,847.1 1710.3,783.7 1710.4,954.7 1710.7,797.3 1710.8,975.0 1711.0,812.3 1711.2,975.0 1711.6,975.0 1712.0,835.7 1712.1,975.0 1712.4,821.3 1712.7,820.3 1712.9,975.0 1713.1,975.0 1713.5,826.5 1713.6,975.0 1714.0,810.3 1714.3,808.0 1714.5,975.0 1714.8,975.0 1714.9,808.6 1715.0,975.0 1715.3,830.6 1715.6,795.8 1715.7,975.0 1716.1,808.0 1716.4,975.0 1716.6,975.0 1716.8,805.6 1717.0,832.7 1717.1,975.0 1717.8,806.1 1717.8,975.0 1718.1,975.0 1718.4,817.1 1718.5,802.0 1718.8,975.0 1719.2,787.4 1719.4,975.0 1719.5,836.8 1719.6,975.0 1720.1,832.1 1720.2,975.0 1720.5,975.0 1721.0,794.3 1721.0,793.6 1721.5,933.7 1721.6,954.8 1721.8,768.7 1722.4,803.8 1722.5,957.0 1722.6,975.0 1722.9,806.2 1723.3,801.4 1723.4,972.2 1723.7,799.2 1723.8,975.0 1724.0,975.0 1724.3,855.3 1724.6,975.0 1724.9,813.3 1725.3,928.0 1725.5,793.1 1725.9,812.9 1725.9,975.0 1726.1,975.0 1726.3,814.2 1726.7,975.0 1726.8,809.9 1727.3,954.5 1727.4,761.6 1727.6,975.0 1727.7,808.0 1728.1,975.0 1728.4,801.9 1728.6,813.8 1728.9,975.0 1729.1,975.0 1729.2,791.0 1729.8,815.3 1729.9,941.7 1730.1,961.3 1730.5,769.8 1730.5,800.5 1730.9,963.8 1731.3,787.2 1731.3,975.0 1731.5,799.4 1731.6,975.0 1732.1,814.0 1732.4,975.0 1732.5,975.0 1733.0,799.7 1733.1,773.6 1733.1,975.0 1733.8,808.0 1734.0,975.0 1734.1,975.0 1734.2,858.4 1734.6,975.0 1735.0,800.5 1735.0,799.1 1735.3,975.0 1735.6,975.0 1735.7,836.3 1736.0,975.0 1736.4,779.8 1736.7,952.4 1737.0,797.8 1737.0,791.9 1737.2,975.0 1737.7,791.7 1737.9,975.0 1738.2,973.3 1738.4,811.5 1738.5,830.1 1738.6,975.0 1739.4,783.5 1739.5,975.0 1739.8,807.4 1739.9,958.0 1740.0,783.4 1740.1,975.0 1740.6,937.6 1740.8,784.0 1741.0,821.5 1741.2,975.0 1741.6,803.3 1741.8,975.0 1742.1,805.1 1742.4,948.8 1742.6,975.0 1743.0,794.8 1743.0,784.3 1743.2,975.0 1743.8,975.0 1744.0,794.0 1744.2,975.0 1744.4,810.6 1744.6,975.0 1744.7,811.9 1745.4,975.0 1745.5,810.1 1745.8,806.3 1745.9,975.0 1746.0,975.0 1746.3,811.2 1746.7,975.0 1746.7,828.8 1747.1,789.8 1747.3,956.8 1747.5,839.9 1747.8,926.6 1748.3,811.2 1748.4,975.0 1748.6,963.8 1748.7,804.4 1749.0,975.0 1749.4,815.2 1749.7,975.0 1749.8,780.7 1750.1,975.0 1750.2,833.5 1750.7,975.0 1751.0,803.5 1751.3,975.0 1751.5,824.6 1751.8,975.0 1751.9,827.3 1752.1,975.0 1752.4,826.4 1752.6,975.0 1752.8,779.0 1753.3,975.0 1753.4,811.9 1753.6,975.0 1753.9,831.5 1754.0,975.0 1754.3,861.1 1754.7,809.8 1754.8,975.0 1755.0,975.0 1755.2,829.1 1755.5,975.0 1755.9,813.5 1756.0,810.6 1756.2,975.0 1756.6,975.0 1756.8,805.2 1757.0,814.1 1757.2,975.0 1757.5,975.0 1757.8,831.4 1758.0,947.7 1758.1,812.6 1758.7,975.0 1758.9,772.9 1759.2,975.0 1759.5,834.9 1759.5,975.0 1759.7,771.2 1760.4,897.5 1760.5,777.8 1760.8,760.7 1761.0,970.5 1761.1,975.0 1761.5,810.1 1761.5,803.5 1761.9,975.0 1762.3,975.0 1762.5,831.2 1762.8,830.8 1762.9,975.0 1763.0,955.1 1763.2,769.9 1763.6,975.0 1763.8,809.3 1764.2,957.3 1764.2,799.6 1764.5,975.0 1764.9,783.5 1765.2,975.0 1765.3,805.5 1765.5,824.1 1765.7,975.0 1766.0,975.0 1766.4,800.8 1766.6,794.3 1766.7,975.0 1767.0,975.0 1767.4,807.7 1767.8,827.7 1767.9,975.0 1768.0,975.0 1768.1,827.3 1768.5,975.0 1768.8,793.9 1769.0,975.0 1769.4,799.6 1769.7,975.0 1770.0,808.5 1770.1,975.0 1770.1,800.5 1770.5,975.0 1771.0,831.6 1771.0,975.0 1771.3,856.5 1771.6,975.0 1771.8,835.8 1772.1,817.8 1772.2,975.0 1772.6,975.0 1773.0,850.5 1773.2,812.3 1773.5,975.0 1773.6,975.0 1773.8,855.1 1774.1,822.7 1774.3,958.6 1774.5,972.7 1774.7,798.8 1775.1,975.0 1775.3,792.1 1775.6,975.0 1775.8,819.9 1776.0,811.3 1776.2,975.0 1776.7,975.0 1777.0,774.3 1777.2,975.0 1777.3,823.3 1777.6,805.4 1778.0,975.0 1778.1,975.0 1778.3,825.6 1778.5,776.2 1778.9,975.0 1779.2,975.0 1779.5,791.6 1779.5,776.5 1779.6,975.0 1780.1,975.0 1780.4,823.8 1780.6,975.0 1780.8,800.2 1781.1,975.0 1781.3,798.3 1781.6,818.4 1781.8,975.0 1782.1,975.0 1782.4,827.7 1782.6,975.0 1782.7,827.1 1783.3,806.7 1783.5,935.3 1783.6,975.0 1783.7,792.9 1784.2,975.0 1784.4,838.5 1784.6,975.0 1784.7,821.4 1785.2,975.0 1785.4,803.2 1785.6,801.4 1785.6,975.0 1786.1,797.2 1786.2,975.0 1786.5,975.0 1786.6,814.6 1787.1,975.0 1787.2,794.8 1787.7,831.3 1788.0,955.5 1788.1,774.2 1788.2,975.0 1788.5,975.0 1788.7,798.4 1789.0,975.0 1789.1,812.2 1789.5,975.0 1789.6,802.3 1790.1,975.0 1790.3,784.0 1790.6,810.9 1790.9,951.8 1791.0,793.0 1791.1,975.0 1791.5,782.9 1791.6,975.0 1792.1,797.4 1792.3,975.0 1792.6,809.9 1792.7,975.0 1793.1,975.0 1793.3,839.4 1793.7,975.0 1793.9,798.3 1794.1,975.0 1794.3,792.7 1794.6,760.1 1794.7,975.0 1795.2,975.0 1795.4,826.8 1795.5,811.1 1795.6,975.0 1796.0,975.0 1796.5,787.7 1796.5,788.7 1796.8,975.0 1797.0,812.9 1797.2,967.2 1797.7,818.4 1797.8,975.0 1798.4,975.0 1798.5,824.1 1798.7,975.0 1799.0,812.5 1799.2,975.0 1799.3,791.6 1799.7,771.2 1799.7,975.0 1800.0,812.6 1800.4,975.0 1800.7,975.0 1800.9,821.6 1801.2,808.7 1801.4,975.0 1801.6,975.0 1801.7,793.0 1802.2,975.0 1802.3,806.4 1802.5,810.7 1802.6,975.0 1803.0,816.4 1803.5,975.0 1803.6,806.7 1803.7,975.0 1804.0,975.0 1804.3,800.7 1804.9,807.2 1805.0,975.0 1805.1,975.0 1805.3,818.9 1805.5,975.0 1805.9,811.9 1806.0,975.0 1806.1,817.7 1806.6,975.0 1806.8,768.4 1807.2,975.0 1807.3,835.9 1807.6,814.0 1807.6,975.0 1808.1,781.1 1808.4,975.0 1808.8,975.0 1809.0,790.1 1809.0,784.8 1809.2,927.8 1809.6,796.2 1809.7,975.0 1810.1,975.0 1810.3,782.1 1810.5,975.0 1810.6,823.2 1811.1,975.0 1811.4,786.5 1811.6,975.0 1812.0,827.5 1812.1,822.7 1812.1,975.0 1812.6,971.1 1812.7,821.4 1813.1,975.0 1813.2,786.8 1813.6,819.0 1813.7,975.0 1814.0,975.0 1814.5,839.9 1814.6,975.0 1814.9,808.8 1815.3,975.0 1815.4,803.0 1815.8,975.0 1815.9,786.6 1816.1,975.0 1816.1,807.5 1816.6,813.4 1816.7,975.0 1817.1,975.0 1817.3,807.9 1817.5,975.0 1817.6,793.5 1818.2,843.1 1818.5,975.0 1818.6,975.0 1818.9,817.9 1819.1,975.0 1819.2,831.6 1819.6,975.0 1819.8,810.5 1820.0,975.0 1820.2,817.5 1820.5,975.0 1820.9,795.8 1821.1,975.0 1821.3,814.4 1821.6,774.7 1822.0,952.9 1822.2,975.0 1822.3,844.9 1822.5,975.0 1822.9,800.6 1823.0,810.1 1823.3,975.0 1823.5,975.0 1823.8,799.1 1824.3,828.1 1824.3,975.0 1824.6,975.0 1824.8,822.3 1825.1,803.4 1825.2,975.0 1825.5,975.0 1825.6,822.1 1826.1,807.6 1826.2,975.0 1826.6,975.0 1826.9,818.7 1827.2,975.0 1827.5,801.0 1827.7,949.2 1827.9,796.3 1828.1,975.0 1828.2,814.3 1828.9,964.8 1829.0,817.4 1829.1,975.0 1829.2,806.1 1829.5,975.0 1829.7,811.5 1830.0,823.7 1830.1,975.0 1830.5,975.0 1830.8,791.2 1831.1,975.0 1831.5,801.4 1831.5,812.3 1831.7,975.0 1832.2,975.0 1832.3,822.2 1832.7,975.0 1833.0,796.5 1833.0,806.5 1833.3,975.0 1833.6,975.0 1834.0,789.4 1834.0,785.7 1834.1,975.0 1834.6,975.0 1834.7,768.1 1835.1,975.0 1835.2,806.7 1835.5,808.5 1835.7,975.0 1836.1,975.0 1836.4,817.1 1836.6,975.0 1836.9,795.9 1837.0,975.0 1837.2,821.0" fill="none" stroke="#000" stroke-width="2.2" stroke-linejoin="round"/>
</g>
</svg>
<svg class="a" style="left:2px;top:3px" width="16" height="16" viewBox="0 0 16 16">
<rect x="0.5" y="0.5" width="15" height="15" rx="1.5" fill="#f2f4f6" stroke="#3d6a50" stroke-width="0.8"/>
<path d="M2 13 L8 6 L14 13 Z" fill="#fff" stroke="#888" stroke-width="0.6"/>
<path d="M8 1.5 L11 6.5 L8 10 L5 6.5Z" fill="#3a1a1a"/><path d="M8 4.5 L9.6 6.8 L8 8.6 L6.4 6.8Z" fill="#e04848"/>
<path d="M1.5 9.5 L5 8.5 L5 12 L1.5 12Z" fill="#2e3e4e"/><path d="M11 8.5 L14.5 9.5 L14.5 12 L11 12Z" fill="#2e3e4e"/>
</svg>
<div class="a" style="left:1828px;top:11px;width:8px;height:2px;background:#0d3b22"></div>
<svg class="a" style="left:1852px;top:4px" width="12" height="11" viewBox="0 0 12 11"><rect x="1" y="3.5" width="7.5" height="7" fill="none" stroke="#0d3b22" stroke-width="1.3"/><path d="M3.5 3.5V1h7.5v7h-2.5" fill="none" stroke="#0d3b22" stroke-width="1.3"/></svg>
<div class="a" style="left:1872px;top:0;width:45px;height:19px;background:#c94f4e"></div>
<svg class="a" style="left:1890px;top:5px" width="10" height="10" viewBox="0 0 10 10"><path d="M1 1L9 9M9 1L1 9" stroke="#fff" stroke-width="1.5"/></svg>
<svg class="a" style="left:24px;top:35px" width="31" height="23" viewBox="0 0 31 23">
<defs><linearGradient id="cam" x1="0" y1="0" x2="1" y2="0"><stop offset="0" stop-color="#f4f4f4"/><stop offset="1" stop-color="#d2d2d2"/></linearGradient>
<radialGradient id="lens" cx="0.5" cy="0.5" r="0.5"><stop offset="0" stop-color="#111"/><stop offset="0.28" stop-color="#222"/><stop offset="0.36" stop-color="#999"/><stop offset="0.7" stop-color="#d8d8d8"/><stop offset="1" stop-color="#8a8a8a"/></radialGradient></defs>
<rect x="4" y="1" width="6" height="2.5" fill="#ddd" stroke="#aaa" stroke-width="0.5"/>
<rect x="0.5" y="3" width="29.5" height="19" fill="url(#cam)" stroke="#777" stroke-width="1"/>
<circle cx="19.5" cy="12" r="7.5" fill="url(#lens)"/>
</svg>
<div class="btn pressed" style="left:560px;width:56px"><div class="t">Show<br>distortion</div></div>
<div class="btn " style="left:636px;width:60px"><div class="t">Reset<br>averaging</div></div>
<div class="btn " style="left:716px;width:38px"><svg class="a" style="left:10px;top:3.5px" width="17" height="14" viewBox="0 0 17 14"><path d="M0.5 1.5h6l1.5 1.5H16.5V14H0.5z" fill="#b4b4b4"/><path d="M0.5 5H16.5" stroke="#c8c8c8" stroke-width="0.8"/></svg><div class="t" style="top:23.5px;color:#c4c4c4">WAV</div></div>
<div class="btn " style="left:764px;width:48px"><svg class="a" style="left:16px;top:3.5px" width="15" height="15" viewBox="0 0 15 15"><path d="M0.5 0.5h12l2 2v12h-14z" fill="#333"/><rect x="3" y="1" width="8" height="5" fill="#e8e8e8"/><rect x="3.5" y="9" width="8" height="5.5" fill="#e8e8e8"/><rect x="5" y="10.5" width="2" height="3" fill="#333"/></svg><div class="t" style="top:23.5px">Current</div></div>
<div class="btn " style="left:822px;width:48px"><svg class="a" style="left:16px;top:3.5px" width="15" height="15" viewBox="0 0 15 15"><path d="M0.5 0.5h12l2 2v12h-14z" fill="#333"/><rect x="3" y="1" width="8" height="5" fill="#e8e8e8"/><rect x="3.5" y="9" width="8" height="5.5" fill="#e8e8e8"/><rect x="5" y="10.5" width="2" height="3" fill="#333"/></svg><div class="t" style="top:23.5px">Peak</div></div>
<div class="btn " style="left:880px;width:48px"><svg class="a" style="left:16px;top:3.5px" width="15" height="15" viewBox="0 0 15 15"><path d="M0.5 0.5h12l2 2v12h-14z" fill="#333"/><rect x="3" y="1" width="8" height="5" fill="#e8e8e8"/><rect x="3.5" y="9" width="8" height="5.5" fill="#e8e8e8"/><rect x="5" y="10.5" width="2" height="3" fill="#333"/></svg><div class="t" style="top:23.5px">Both</div></div>
<div class="btn " style="left:948px;width:44px"><svg class="a" style="left:5px;top:4px" width="32" height="32" viewBox="0 0 32 32"><path d="M4.5 2.5V6M4.5 16V31H29.5V2.5H4.5" fill="none" stroke="#000" stroke-width="2.2"/><path d="M1 10.5H10M7 7.5L10.5 10.5L7 13.5M1 22.5H10M7 19.5L10.5 22.5L7 25.5" fill="none" stroke="#000" stroke-width="2"/></svg></div>
<div class="btn " style="left:1012px;width:52px"><div class="t">Stepped<br>sine</div></div>
<div class="btn " style="left:1084px;width:54px"><div class="t">Calibrate<br>level</div></div>
<div class="a" style="left:1150px;top:27px;font-size:11px;line-height:13px">FS sine Vrms</div>
<div class="a" style="left:1148px;top:47px;width:70px;height:21px;background:#fff;border:1px solid #9a9a9a;font-size:11px;line-height:19px;padding-left:12px">1,0000 V</div>
<svg class="a" style="left:1150px;top:49px" width="7" height="7"><path d="M0 0H7L0 7Z" fill="#333"/></svg>
<svg class="a" style="left:1740px;top:30px" width="180" height="32" viewBox="1740 30 180 32">
<rect x="1751.5" y="34.5" width="28" height="16" fill="#bdbdbd" stroke="#777"/>
<path d="M1744.5 38l2.5-3 2.5 3z M1744.5 47.5l2.5 3 2.5-3z" fill="#111"/><rect x="1744.5" y="40.5" width="4.5" height="4.5" fill="#444"/>
<path d="M1754.5 52.5l-3 2.5 3 2.5z M1776.5 52.5l3 2.5-3 2.5z" fill="#111"/><rect x="1760" y="52.5" width="10" height="4.5" fill="#444"/>
<rect x="1792.5" y="34.5" width="35" height="23" fill="#fff" stroke="#bbb"/>
<path d="M1805.5 34.5v23M1813.5 34.5v23M1819.5 34.5v23M1823.5 34.5v23" stroke="#bbb"/>
<rect x="1840.5" y="34.5" width="35" height="23" fill="#fff" stroke="#bbb"/>
<path d="M1858 37.5v6.5M1855 40.5l3-3 3 3M1858 48.5v7M1855 52.5l3 3 3-3M1842.5 46h7.5M1845.5 43l-3 3 3 3M1874 46h-7.5M1871 43l3 3-3 3" fill="none" stroke="#000" stroke-width="2.1"/>
</svg>
<svg class="a" style="left:1888px;top:34px" width="24" height="24" viewBox="-12 -12 24 24">
<defs><linearGradient id="gear" x1="0" y1="0" x2="0" y2="1"><stop offset="0" stop-color="#d8d8d8"/><stop offset="1" stop-color="#8a8a8a"/></linearGradient></defs>
<rect x="-2" y="-11.5" width="4" height="5" transform="rotate(0.0)" fill="url(#gear)"/><rect x="-2" y="-11.5" width="4" height="5" transform="rotate(30.0)" fill="url(#gear)"/><rect x="-2" y="-11.5" width="4" height="5" transform="rotate(60.0)" fill="url(#gear)"/><rect x="-2" y="-11.5" width="4" height="5" transform="rotate(90.0)" fill="url(#gear)"/><rect x="-2" y="-11.5" width="4" height="5" transform="rotate(120.0)" fill="url(#gear)"/><rect x="-2" y="-11.5" width="4" height="5" transform="rotate(150.0)" fill="url(#gear)"/><rect x="-2" y="-11.5" width="4" height="5" transform="rotate(180.0)" fill="url(#gear)"/><rect x="-2" y="-11.5" width="4" height="5" transform="rotate(210.0)" fill="url(#gear)"/><rect x="-2" y="-11.5" width="4" height="5" transform="rotate(240.0)" fill="url(#gear)"/><rect x="-2" y="-11.5" width="4" height="5" transform="rotate(270.0)" fill="url(#gear)"/><rect x="-2" y="-11.5" width="4" height="5" transform="rotate(300.0)" fill="url(#gear)"/><rect x="-2" y="-11.5" width="4" height="5" transform="rotate(330.0)" fill="url(#gear)"/><circle r="8.5" fill="url(#gear)"/><circle r="3.5" fill="#f4f4f4" stroke="#999" stroke-width="1"/></svg>
<div class="a" style="left:32.5px;top:69.5px;font-size:10.2px;line-height:13px">SPL</div>
<div class="a" style="left:2px;top:86px;width:16px;height:886px;background:#fff;border:1px solid #a0a0a0"></div>
<div class="a" style="left:2px;top:86px;width:16px;height:15px;background:linear-gradient(90deg,#f0f0f0,#cfcfcf);border:1px solid #a0a0a0"></div>
<svg class="a" style="left:5px;top:90px" width="10" height="6"><path d="M1 5.5L5 1.5L9 5.5Z" fill="#333"/></svg>
<div class="a" style="left:2px;top:956px;width:16px;height:16px;background:linear-gradient(90deg,#f0f0f0,#cfcfcf);border:1px solid #a0a0a0"></div>
<svg class="a" style="left:5px;top:961px" width="10" height="6"><path d="M1 0.5L5 4.5L9 0.5Z" fill="#333"/></svg>
<div class="a" style="left:2px;top:389px;width:16px;height:224px;background:linear-gradient(90deg,#ededed,#cdcdcd);border:1px solid #a0a0a0"></div>
<div class="ylab" style="top:100.0px">35</div>
<div class="ylab" style="top:140.0px">30</div>
<div class="ylab" style="top:181.0px">25</div>
<div class="ylab" style="top:262.0px">15</div>
<div class="ylab" style="top:303.0px">10</div>
<div class="ylab" style="top:344.0px">5</div>
<div class="ylab" style="top:385.0px">0</div>
<div class="ylab" style="top:425.0px">-5</div>
<div class="ylab" style="top:466.0px">-10</div>
<div class="ylab" style="top:507.0px">-15</div>
<div class="ylab" style="top:547.0px">-20</div>
<div class="ylab" style="top:588.0px">-25</div>
<div class="ylab" style="top:629.0px">-30</div>
<div class="ylab" style="top:670.0px">-35</div>
<div class="ylab" style="top:710.0px">-40</div>
<div class="ylab" style="top:751.0px">-45</div>
<div class="ylab" style="top:792.0px">-50</div>
<div class="ylab" style="top:832.0px">-55</div>
<div class="ylab" style="top:873.0px">-60</div>
<div class="ylab" style="top:914.0px">-65</div>
<div class="ylab" style="top:955.0px">-70</div>
<div class="xlab " style="left:57.4px">3</div>
<div class="xlab " style="left:94.5px">4</div>
<div class="xlab " style="left:139.6px">5</div>
<div class="xlab " style="left:176.5px">6</div>
<div class="xlab " style="left:207.7px">7</div>
<div class="xlab " style="left:234.7px">8</div>
<div class="xlab " style="left:258.5px">9</div>
<div class="xlab " style="left:279.8px">10</div>
<div class="xlab " style="left:420.1px">20</div>
<div class="xlab " style="left:502.1px">30</div>
<div class="xlab " style="left:556.0px">4</div>
<div class="xlab " style="left:605.4px">50</div>
<div class="xlab " style="left:642.3px">60</div>
<div class="xlab " style="left:673.5px">70</div>
<div class="xlab " style="left:700.5px">80</div>
<div class="xlab " style="left:724.4px">90</div>
<div class="xlab " style="left:745.7px">100</div>
<div class="xlab " style="left:885.9px">200</div>
<div class="xlab " style="left:967.9px">300</div>
<div class="xlab " style="left:1026.1px">400</div>
<div class="xlab " style="left:1071.3px">500</div>
<div class="xlab " style="left:1108.2px">600</div>
<div class="xlab " style="left:1139.3px">700</div>
<div class="xlab " style="left:1166.4px">800</div>
<div class="xlab " style="left:1190.2px">900</div>
<div class="xlab " style="left:1211.5px">1k</div>
<div class="xlab " style="left:1351.7px">2k</div>
<div class="xlab " style="left:1433.8px">3k</div>
<div class="xlab " style="left:1492.0px">4k</div>
<div class="xlab " style="left:1537.1px">5k</div>
<div class="xlab " style="left:1574.0px">6k</div>
<div class="xlab " style="left:1605.2px">7k</div>
<div class="xlab " style="left:1632.2px">8k</div>
<div class="xlab " style="left:1656.0px">9k</div>
<div class="xlab " style="left:1677.3px">10k</div>
<div class="xlab g" style="left:1730.4px">13k</div>
<div class="xlab g" style="left:1759.4px">15k</div>
<div class="xlab g" style="left:1784.7px">17k</div>
<div class="xlab " style="left:1817.6px">20k</div>
<div class="xlab g" style="left:1862.7px">25k</div>
<div class="xlab " style="left:1899.6px">30kHz</div>
<div class="a" style="left:30px;top:220px;width:26px;height:16px;background:#fff;border:1px solid #1a1a78;color:#1a1a78;font-size:11px;line-height:14px;text-align:center">20,0</div>
<div class="a" style="left:558px;top:975px;width:26px;height:15px;background:#fff;border:1px solid #1a1a78;color:#1a1a78;font-size:11px;line-height:14px;text-align:center">42,3</div>
<div class="a" style="left:571px;top:971px;width:1px;height:4px;background:#000"></div>
<svg class="a" style="left:63px;top:89px" width="16" height="16" viewBox="0 0 16 16"><circle cx="8" cy="8" r="6.3" fill="#fff" stroke="#333" stroke-width="1.8"/><rect x="4" y="6.6" width="8" height="2.8" fill="#333"/><rect x="6.6" y="4" width="2.8" height="8" fill="#333"/></svg>
<svg class="a" style="left:63px;top:112px" width="16" height="16" viewBox="0 0 16 16"><circle cx="8" cy="8" r="6.3" fill="#fff" stroke="#333" stroke-width="1.8"/><rect x="4" y="6.6" width="8" height="2.8" fill="#333"/></svg>
<svg class="a" style="left:1853px;top:950px" width="16" height="16" viewBox="0 0 16 16"><circle cx="8" cy="8" r="6.3" fill="#fff" stroke="#333" stroke-width="1.8"/><rect x="4" y="6.6" width="8" height="2.8" fill="#333"/></svg>
<svg class="a" style="left:1877px;top:950px" width="16" height="16" viewBox="0 0 16 16"><circle cx="8" cy="8" r="6.3" fill="#fff" stroke="#333" stroke-width="1.8"/><rect x="4" y="6.6" width="8" height="2.8" fill="#333"/><rect x="6.6" y="4" width="2.8" height="8" fill="#333"/></svg>
<div class="a" style="left:59px;top:133px;width:62px;height:21px;background:#fff;border:1px solid #a5a5a5;font-size:10.5px;line-height:21px;padding-left:6.5px">SPL</div>
<div class="a" style="left:104px;top:134px;width:16px;height:19px;background:linear-gradient(90deg,#eaeaea,#c8c8c8);border-left:1px solid #a5a5a5"></div>
<svg class="a" style="left:107.5px;top:141px" width="10" height="6"><path d="M0.5 0.5H9.5L5 5.5Z" fill="#333"/></svg>
<div class="a" style="left:123px;top:87px;width:255px;height:181px;background:rgba(255,255,255,.93);border:3px solid #9d9d9d;border-radius:10px"></div>
<div class="dt" style="left:124px;width:253px;top:97px;text-align:center"><b>316,25 Hz, -45,74 dBFS, 31,90 dB</b></div>
<div class="dt" style="left:124px;width:253px;top:116px;text-align:center">Span: <b>0 .. 20 947 Hz</b></div>
<div class="dt r" style="left:100px;width:59px;top:134.5px">N+D:</div>
<div class="dt" style="left:163.5px;top:134.5px"><b>-16,9 dB A</b></div>
<div class="dt r" style="left:230px;width:60px;top:134.5px">THD:</div>
<div class="dt" style="left:294.5px;top:134.5px"><b>0,13 %</b></div>
<div class="dt r" style="left:100px;width:59px;top:153.5px">N:</div>
<div class="dt" style="left:163.5px;top:153.5px"><b>-10,6 dB</b></div>
<div class="dt r" style="left:230px;width:60px;top:153.5px">THD+N:</div>
<div class="dt" style="left:294.5px;top:153.5px"><b>0,76 %</b></div>
<div class="dt" style="left:152.5px;top:172.5px">HH 10 .. 50</div>
<div class="dt r" style="left:230px;width:60px;top:172.5px">HHD:</div>
<div class="dt" style="left:294.5px;top:172.5px"><b>0,031 %</b></div>
<div class="dt r" style="left:100px;width:59px;top:191.5px">2nd:</div>
<div class="dt" style="left:163.5px;top:191.5px"><b>0,077 %</b></div>
<div class="dt r" style="left:230px;width:60px;top:191.5px">3rd:</div>
<div class="dt" style="left:294.5px;top:191.5px"><b>0,047 %</b></div>
<div class="dt r" style="left:100px;width:59px;top:210.5px">4th:</div>
<div class="dt" style="left:163.5px;top:210.5px"><b>0,087 %</b></div>
<div class="dt r" style="left:230px;width:60px;top:210.5px">5th:</div>
<div class="dt" style="left:294.5px;top:210.5px"><b>0,034 %</b></div>
<div class="dt r" style="left:100px;width:59px;top:229.5px">6th:</div>
<div class="dt" style="left:163.5px;top:229.5px"><b>0,0032 %</b></div>
<div class="dt r" style="left:230px;width:60px;top:229.5px">7th:</div>
<div class="dt" style="left:294.5px;top:229.5px"><b>0,0067 %</b></div>
<div class="dt r" style="left:100px;width:59px;top:248.5px">8th:</div>
<div class="dt" style="left:163.5px;top:248.5px"><b>0,0049 %</b></div>
<div class="dt r" style="left:230px;width:60px;top:248.5px">9th:</div>
<div class="dt" style="left:294.5px;top:248.5px"><b>0,0035 %</b></div>
<div class="a" style="left:502px;top:108px;font-size:35px;line-height:40px;font-weight:bold;white-space:nowrap;transform:scaleX(.92);transform-origin:0 0">Скрин 315 Гц ПК 2</div>
<div class="hl" style="left:978.2px;top:111.0px">1</div>
<div class="hl" style="left:1118.5px;top:620.0px">2</div>
<div class="hl" style="left:1200.5px;top:657.0px">3</div>
<div class="hl" style="left:1259.0px;top:615.0px">4</div>
<div class="hl" style="left:1304.0px;top:693.0px">5</div>
<div class="hbox" style="left:1336.5px;top:851.0px">6</div>
<div class="hbox" style="left:1368.5px;top:791.0px">7</div>
<div class="hbox" style="left:1395.0px;top:820.0px">8</div>
<div class="hbox" style="left:1419.0px;top:884.0px">9</div>
<div class="a" style="left:1665px;top:87px;width:139px;height:69px;background:rgba(255,255,255,.92);border:3px solid #9d9d9d;border-radius:10px"></div>
<div class="dt" style="left:1665px;width:139px;top:96.5px;text-align:center;font-size:16px;line-height:18px"><b>31,90 dB</b></div>
<div class="dt" style="left:1665px;width:139px;top:117px;text-align:center;font-size:10px;line-height:12px;transform:scaleX(.93)"><b>31,9 dB C, 25,3 dB A</b></div>
<div class="dt" style="left:1665px;width:139px;top:129px;text-align:center;font-size:10px;line-height:12px;transform:scaleX(.93)"><b>Peak sample: -45,55 dBFS</b></div>
<div class="dt" style="left:1665px;width:139px;top:140.5px;text-align:center;font-size:10px;line-height:12px;transform:scaleX(.93)"><b>31,9 dB 22 - 22k UNW</b></div>
<div class="a" style="left:1849px;top:88px;width:48px;height:43px;border:1px solid #5f7072;border-radius:6px;background:linear-gradient(#58706f,#9fb5b7 10%,#bccecf 22%,#bfd0d1 85%,#dde8e8);box-shadow:inset 2px 0 2px rgba(60,80,80,.35),inset -2px 0 2px rgba(60,80,80,.35)"></div>
<svg class="a" style="left:1864px;top:100px" width="18" height="18" viewBox="0 0 18 18"><defs><radialGradient id="rd" cx="0.45" cy="0.4" r="0.6"><stop offset="0" stop-color="#ff9a80"/><stop offset="0.55" stop-color="#f0553a"/><stop offset="0.85" stop-color="#c03018"/><stop offset="1" stop-color="#8a2010"/></radialGradient></defs><circle cx="9" cy="8.5" r="7" fill="url(#rd)"/></svg>
<div class="a" style="left:59px;top:930px;width:183px;height:34px;background:rgba(255,255,255,.92);border:3px solid #9d9d9d;border-radius:11px"></div>
<div class="a" style="left:70px;top:938.5px;font-size:17px;line-height:20px;font-weight:bold;white-space:nowrap;transform:scaleX(.974);transform-origin:0 0">2 coherent averages</div>
<div class="rb" style="left:1805px;top:905px;width:92px;height:19px">10 .. 200</div>
<div class="rb" style="left:1805px;top:927px;width:92px;height:19px">20 .. 20 000</div>
<div class="a" style="left:57px;top:995px;width:1843px;height:16px;background:#fff;border:1px solid #a0a0a0"></div>
<div class="a" style="left:891px;top:995px;width:993px;height:16px;background:linear-gradient(#f7f7f7,#dcdcdc);border:1px solid #a0a0a0"></div>
<div class="a" style="left:57px;top:995px;width:16px;height:16px;background:linear-gradient(#f3f3f3,#d3d3d3);border:1px solid #a0a0a0"></div>
<svg class="a" style="left:61px;top:998px" width="8" height="10"><path d="M6 1V9L2 5Z" fill="#333"/></svg>
<div class="a" style="left:1883px;top:995px;width:17px;height:16px;background:linear-gradient(#f3f3f3,#d3d3d3);border:1px solid #a0a0a0"></div>
<svg class="a" style="left:1888px;top:998px" width="8" height="10"><path d="M2 1V9L6 5Z" fill="#333"/></svg>
<div class="a" style="left:450px;top:1014px;width:1055px;height:21px;background:#fff;border:1px solid #9a9a9a;box-shadow:0 1px 3px rgba(0,0,0,.45),inset 0 0 0 1px #e8e8e8"></div>
<div class="a" style="left:455px;top:1017px;width:13px;height:14px;border:1px solid #b0b0b0;border-radius:2px;background:linear-gradient(#f4f4f4,#d8d8d8)"></div><svg class="a" style="left:456px;top:1018px" width="12" height="12"><path d="M2.5 5.5L5 10L9.5 1" fill="none" stroke="#b0b0b0" stroke-width="1.5"/></svg>
<div class="dt" style="left:475px;top:1019px;color:#b0b0b0">No measurement</div>
<div class="dt" style="left:753px;top:1019px;color:#b0b0b0">dB</div>
<div class="a" style="left:803px;top:1017px;width:13px;height:14px;border:1px solid #777;border-radius:2px;background:linear-gradient(#f4f4f4,#d8d8d8)"></div><svg class="a" style="left:804px;top:1018px" width="12" height="12"><path d="M2.5 5.5L5 10L9.5 1" fill="none" stroke="#111" stroke-width="1.5"/></svg>
<div class="dt" style="left:823px;top:1019px">Spectrum</div>
<div class="a" style="left:988px;top:1024px;width:49px;height:2px;background:#000"></div>
<div class="dt" style="left:1073px;top:1019px">-39,1 dB</div>
<div class="a" style="left:1151px;top:1017px;width:13px;height:14px;border:1px solid #777;border-radius:2px;background:linear-gradient(#f4f4f4,#d8d8d8)"></div>
<div class="dt" style="left:1171px;top:1019px;color:#8b1a1a">Peak</div>
<div class="dt" style="left:1425px;top:1019px;color:#8b1a1a">23,5 dB</div>
<div class="a" style="left:0;top:1040px;width:3px;height:40px;background:#3a9a60"></div>
</body></html>
